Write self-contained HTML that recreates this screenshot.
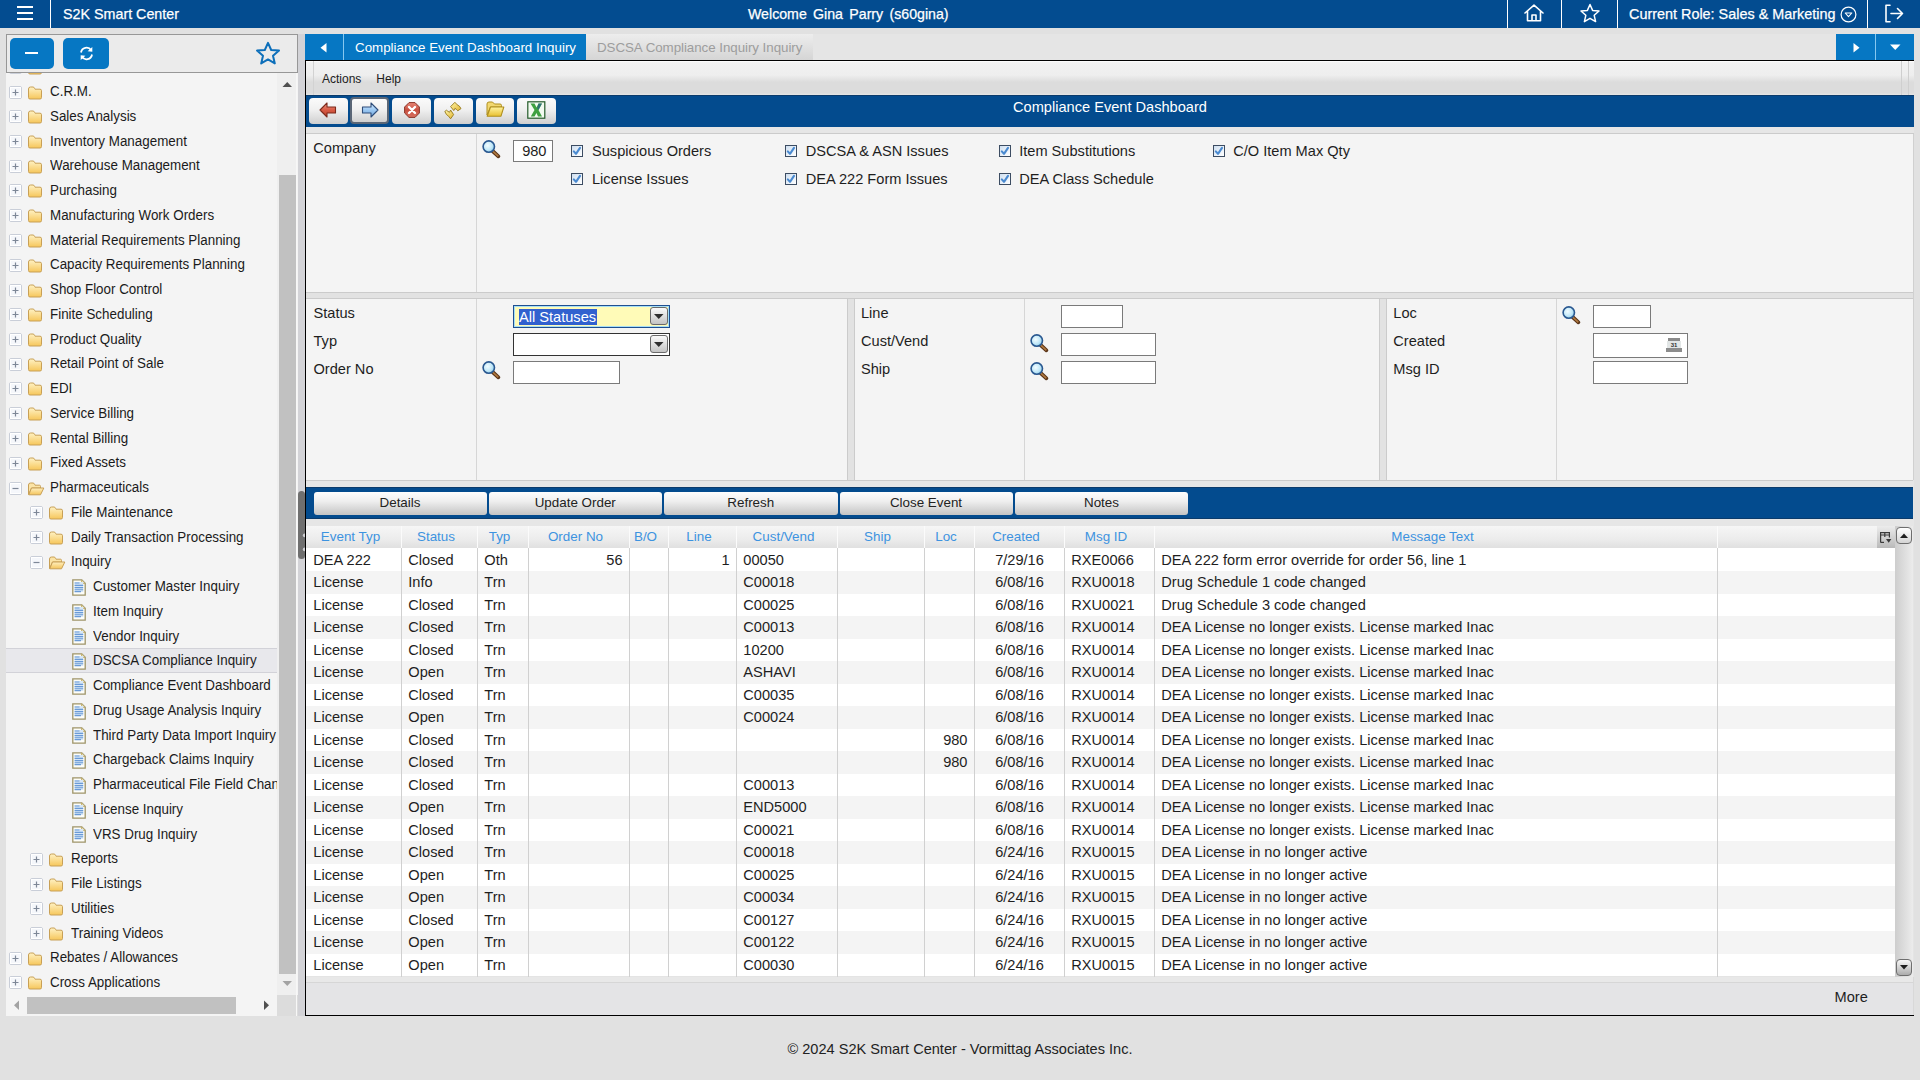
<!DOCTYPE html>
<html><head><meta charset="utf-8"><title>S2K Smart Center</title>
<style>
*{box-sizing:border-box;margin:0;padding:0}
html,body{width:1920px;height:1080px;overflow:hidden}
body{background:#e1e1e1;font-family:"Liberation Sans",sans-serif;position:relative;color:#1e1e1e}
.a{position:absolute}
.t{position:absolute;white-space:nowrap}
svg{position:absolute;overflow:visible}
</style></head><body>
<div class="a" style="left:0px;top:0px;width:1920px;height:28px;background:#034c90"></div>
<div class="a" style="left:17px;top:6px;width:16px;height:2px;background:#fff"></div>
<div class="a" style="left:17px;top:12px;width:16px;height:2px;background:#fff"></div>
<div class="a" style="left:17px;top:18px;width:16px;height:2px;background:#fff"></div>
<div class="a" style="left:50px;top:0px;width:1px;height:28px;background:#fff"></div>
<div class="t" style="left:62.5px;transform:scaleX(0.966);transform-origin:0 50%;top:7.07px;font-size:14.8px;line-height:14.8px;color:#fff;-webkit-text-stroke:0.25px #fff">S2K Smart Center</div>
<div class="t" style="left:747.5px;transform:scaleX(0.957);transform-origin:0 50%;top:6.57px;font-size:14.8px;line-height:14.8px;color:#fff;word-spacing:2.5px;-webkit-text-stroke:0.25px #fff">Welcome Gina Parry (s60gina)</div>
<div class="a" style="left:1507px;top:0px;width:1px;height:28px;background:#fff"></div>
<div class="a" style="left:1561px;top:0px;width:1px;height:28px;background:#fff"></div>
<div class="a" style="left:1617px;top:0px;width:1px;height:28px;background:#fff"></div>
<div class="a" style="left:1867px;top:0px;width:1px;height:28px;background:#fff"></div>
<div class="t" style="left:1629px;transform:scaleX(0.973);transform-origin:0 50%;top:7.07px;font-size:14.8px;line-height:14.8px;color:#fff;-webkit-text-stroke:0.25px #fff">Current Role: Sales &amp; Marketing</div>
<svg style="left:1523px;top:4px" width="22" height="18" viewBox="0 0 22 18"><path d="M2 9 L11 1.2 L20 9 M4.5 7 V16.8 H17.5 V7 M9 16.8 V11 H13 V16.8" fill="none" stroke="#fff" stroke-width="1.6" stroke-linejoin="round" stroke-linecap="round"/></svg><svg style="left:1579px;top:3px" width="22" height="20" viewBox="0 0 22 20"><path d="M11 1.5 L13.6 7.4 L20 8 L15.2 12.3 L16.6 18.6 L11 15.3 L5.4 18.6 L6.8 12.3 L2 8 L8.4 7.4 Z" fill="none" stroke="#fff" stroke-width="1.5" stroke-linejoin="round"/></svg><svg style="left:1840px;top:6px" width="17" height="17" viewBox="0 0 17 17"><circle cx="8.5" cy="8.5" r="7.4" fill="none" stroke="#fff" stroke-width="1.2"/><path d="M5.2 7 L8.5 10.6 L11.8 7 Z" fill="none" stroke="#fff" stroke-width="1.1" stroke-linejoin="round"/></svg><svg style="left:1884px;top:4px" width="20" height="19" viewBox="0 0 20 19"><path d="M6 1.2 H2 V17.8 H6" fill="none" stroke="#fff" stroke-width="1.6" stroke-linecap="round" stroke-linejoin="round"/><path d="M7 9.5 H18.5 M13.5 4.5 L18.5 9.5 L13.5 14.5" fill="none" stroke="#fff" stroke-width="1.6" stroke-linecap="round" stroke-linejoin="round"/></svg><div class="a" style="left:6px;top:34px;width:292px;height:982px;background:#f4f4f4"></div>
<div class="a" style="left:6px;top:34px;width:292px;height:39px;background:#ebebeb;border:1px solid #979797"></div>
<div class="a" style="left:10px;top:38px;width:44px;height:31px;background:#0677c3;border-radius:5px"></div>
<div class="a" style="left:25px;top:52px;width:13px;height:2px;background:#fff"></div>
<div class="a" style="left:63px;top:38px;width:46px;height:31px;background:#0677c3;border-radius:5px"></div>
<svg style="left:78px;top:45px" width="17" height="17" viewBox="0 0 17 17"><path d="M3 7.5 A5.6 5.6 0 0 1 13.2 5.2" fill="none" stroke="#fff" stroke-width="1.8"/><path d="M14.3 2 L14.3 6.8 L9.6 6.3 Z" fill="#fff"/><path d="M14 9.5 A5.6 5.6 0 0 1 3.8 11.8" fill="none" stroke="#fff" stroke-width="1.8"/><path d="M2.7 15 L2.7 10.2 L7.4 10.7 Z" fill="#fff"/></svg>
<svg style="left:255px;top:41px" width="26" height="24" viewBox="0 0 26 24"><path d="M13 1.8 L16.2 9 L24 9.6 L18 14.8 L19.8 22.4 L13 18.4 L6.2 22.4 L8 14.8 L2 9.6 L9.8 9 Z" fill="none" stroke="#0d6fba" stroke-width="2" stroke-linejoin="round"/></svg>
<div class="a" style="left:6px;top:73px;width:271px;height:924px;overflow:hidden">
<svg style="left:3px;top:13px" width="13" height="13" viewBox="0 0 13 13"><rect x="0.5" y="0.5" width="12" height="12" rx="1.5" fill="#f5f7fb" stroke="#c9ced8" stroke-width="1"/><rect x="1.5" y="1.5" width="10" height="10" fill="none" stroke="#ffffff" stroke-width="1"/><path d="M3.5 6.5 H9.5 M6.5 3.5 V9.5" stroke="#7d8797" stroke-width="1.2"/></svg>
<svg style="left:20.5px;top:13px" width="16" height="14" viewBox="0 0 16 14"><defs><linearGradient id="fg" x1="0" y1="0" x2="0" y2="1"><stop offset="0" stop-color="#fff2c4"/><stop offset="1" stop-color="#f6c65a"/></linearGradient></defs><path d="M1.5 3 Q1.5 1 3.5 1 H6 Q7 1 7.5 2.2 L8 3.2 H13 Q14.5 3.2 14.5 4.7 V11.5 Q14.5 13 13 13 H3 Q1.5 13 1.5 11.5 Z" fill="url(#fg)" stroke="#c8a056" stroke-width="1"/></svg>
<div class="t" style="left:44px;transform:scaleX(0.97);transform-origin:0 50%;top:12.02px;font-size:13.8px;line-height:13.8px;color:#1b1b1b;">C.R.M.</div>
<svg style="left:3px;top:37px" width="13" height="13" viewBox="0 0 13 13"><rect x="0.5" y="0.5" width="12" height="12" rx="1.5" fill="#f5f7fb" stroke="#c9ced8" stroke-width="1"/><rect x="1.5" y="1.5" width="10" height="10" fill="none" stroke="#ffffff" stroke-width="1"/><path d="M3.5 6.5 H9.5 M6.5 3.5 V9.5" stroke="#7d8797" stroke-width="1.2"/></svg>
<svg style="left:20.5px;top:37px" width="16" height="14" viewBox="0 0 16 14"><defs><linearGradient id="fg" x1="0" y1="0" x2="0" y2="1"><stop offset="0" stop-color="#fff2c4"/><stop offset="1" stop-color="#f6c65a"/></linearGradient></defs><path d="M1.5 3 Q1.5 1 3.5 1 H6 Q7 1 7.5 2.2 L8 3.2 H13 Q14.5 3.2 14.5 4.7 V11.5 Q14.5 13 13 13 H3 Q1.5 13 1.5 11.5 Z" fill="url(#fg)" stroke="#c8a056" stroke-width="1"/></svg>
<div class="t" style="left:44px;transform:scaleX(0.97);transform-origin:0 50%;top:36.77px;font-size:13.8px;line-height:13.8px;color:#1b1b1b;">Sales Analysis</div>
<svg style="left:3px;top:62px" width="13" height="13" viewBox="0 0 13 13"><rect x="0.5" y="0.5" width="12" height="12" rx="1.5" fill="#f5f7fb" stroke="#c9ced8" stroke-width="1"/><rect x="1.5" y="1.5" width="10" height="10" fill="none" stroke="#ffffff" stroke-width="1"/><path d="M3.5 6.5 H9.5 M6.5 3.5 V9.5" stroke="#7d8797" stroke-width="1.2"/></svg>
<svg style="left:20.5px;top:62px" width="16" height="14" viewBox="0 0 16 14"><defs><linearGradient id="fg" x1="0" y1="0" x2="0" y2="1"><stop offset="0" stop-color="#fff2c4"/><stop offset="1" stop-color="#f6c65a"/></linearGradient></defs><path d="M1.5 3 Q1.5 1 3.5 1 H6 Q7 1 7.5 2.2 L8 3.2 H13 Q14.5 3.2 14.5 4.7 V11.5 Q14.5 13 13 13 H3 Q1.5 13 1.5 11.5 Z" fill="url(#fg)" stroke="#c8a056" stroke-width="1"/></svg>
<div class="t" style="left:44px;transform:scaleX(0.97);transform-origin:0 50%;top:61.52px;font-size:13.8px;line-height:13.8px;color:#1b1b1b;">Inventory Management</div>
<svg style="left:3px;top:87px" width="13" height="13" viewBox="0 0 13 13"><rect x="0.5" y="0.5" width="12" height="12" rx="1.5" fill="#f5f7fb" stroke="#c9ced8" stroke-width="1"/><rect x="1.5" y="1.5" width="10" height="10" fill="none" stroke="#ffffff" stroke-width="1"/><path d="M3.5 6.5 H9.5 M6.5 3.5 V9.5" stroke="#7d8797" stroke-width="1.2"/></svg>
<svg style="left:20.5px;top:87px" width="16" height="14" viewBox="0 0 16 14"><defs><linearGradient id="fg" x1="0" y1="0" x2="0" y2="1"><stop offset="0" stop-color="#fff2c4"/><stop offset="1" stop-color="#f6c65a"/></linearGradient></defs><path d="M1.5 3 Q1.5 1 3.5 1 H6 Q7 1 7.5 2.2 L8 3.2 H13 Q14.5 3.2 14.5 4.7 V11.5 Q14.5 13 13 13 H3 Q1.5 13 1.5 11.5 Z" fill="url(#fg)" stroke="#c8a056" stroke-width="1"/></svg>
<div class="t" style="left:44px;transform:scaleX(0.97);transform-origin:0 50%;top:86.27px;font-size:13.8px;line-height:13.8px;color:#1b1b1b;">Warehouse Management</div>
<svg style="left:3px;top:111px" width="13" height="13" viewBox="0 0 13 13"><rect x="0.5" y="0.5" width="12" height="12" rx="1.5" fill="#f5f7fb" stroke="#c9ced8" stroke-width="1"/><rect x="1.5" y="1.5" width="10" height="10" fill="none" stroke="#ffffff" stroke-width="1"/><path d="M3.5 6.5 H9.5 M6.5 3.5 V9.5" stroke="#7d8797" stroke-width="1.2"/></svg>
<svg style="left:20.5px;top:111px" width="16" height="14" viewBox="0 0 16 14"><defs><linearGradient id="fg" x1="0" y1="0" x2="0" y2="1"><stop offset="0" stop-color="#fff2c4"/><stop offset="1" stop-color="#f6c65a"/></linearGradient></defs><path d="M1.5 3 Q1.5 1 3.5 1 H6 Q7 1 7.5 2.2 L8 3.2 H13 Q14.5 3.2 14.5 4.7 V11.5 Q14.5 13 13 13 H3 Q1.5 13 1.5 11.5 Z" fill="url(#fg)" stroke="#c8a056" stroke-width="1"/></svg>
<div class="t" style="left:44px;transform:scaleX(0.97);transform-origin:0 50%;top:111.02px;font-size:13.8px;line-height:13.8px;color:#1b1b1b;">Purchasing</div>
<svg style="left:3px;top:136px" width="13" height="13" viewBox="0 0 13 13"><rect x="0.5" y="0.5" width="12" height="12" rx="1.5" fill="#f5f7fb" stroke="#c9ced8" stroke-width="1"/><rect x="1.5" y="1.5" width="10" height="10" fill="none" stroke="#ffffff" stroke-width="1"/><path d="M3.5 6.5 H9.5 M6.5 3.5 V9.5" stroke="#7d8797" stroke-width="1.2"/></svg>
<svg style="left:20.5px;top:136px" width="16" height="14" viewBox="0 0 16 14"><defs><linearGradient id="fg" x1="0" y1="0" x2="0" y2="1"><stop offset="0" stop-color="#fff2c4"/><stop offset="1" stop-color="#f6c65a"/></linearGradient></defs><path d="M1.5 3 Q1.5 1 3.5 1 H6 Q7 1 7.5 2.2 L8 3.2 H13 Q14.5 3.2 14.5 4.7 V11.5 Q14.5 13 13 13 H3 Q1.5 13 1.5 11.5 Z" fill="url(#fg)" stroke="#c8a056" stroke-width="1"/></svg>
<div class="t" style="left:44px;transform:scaleX(0.97);transform-origin:0 50%;top:135.77px;font-size:13.8px;line-height:13.8px;color:#1b1b1b;">Manufacturing Work Orders</div>
<svg style="left:3px;top:161px" width="13" height="13" viewBox="0 0 13 13"><rect x="0.5" y="0.5" width="12" height="12" rx="1.5" fill="#f5f7fb" stroke="#c9ced8" stroke-width="1"/><rect x="1.5" y="1.5" width="10" height="10" fill="none" stroke="#ffffff" stroke-width="1"/><path d="M3.5 6.5 H9.5 M6.5 3.5 V9.5" stroke="#7d8797" stroke-width="1.2"/></svg>
<svg style="left:20.5px;top:161px" width="16" height="14" viewBox="0 0 16 14"><defs><linearGradient id="fg" x1="0" y1="0" x2="0" y2="1"><stop offset="0" stop-color="#fff2c4"/><stop offset="1" stop-color="#f6c65a"/></linearGradient></defs><path d="M1.5 3 Q1.5 1 3.5 1 H6 Q7 1 7.5 2.2 L8 3.2 H13 Q14.5 3.2 14.5 4.7 V11.5 Q14.5 13 13 13 H3 Q1.5 13 1.5 11.5 Z" fill="url(#fg)" stroke="#c8a056" stroke-width="1"/></svg>
<div class="t" style="left:44px;transform:scaleX(0.97);transform-origin:0 50%;top:160.52px;font-size:13.8px;line-height:13.8px;color:#1b1b1b;">Material Requirements Planning</div>
<svg style="left:3px;top:186px" width="13" height="13" viewBox="0 0 13 13"><rect x="0.5" y="0.5" width="12" height="12" rx="1.5" fill="#f5f7fb" stroke="#c9ced8" stroke-width="1"/><rect x="1.5" y="1.5" width="10" height="10" fill="none" stroke="#ffffff" stroke-width="1"/><path d="M3.5 6.5 H9.5 M6.5 3.5 V9.5" stroke="#7d8797" stroke-width="1.2"/></svg>
<svg style="left:20.5px;top:186px" width="16" height="14" viewBox="0 0 16 14"><defs><linearGradient id="fg" x1="0" y1="0" x2="0" y2="1"><stop offset="0" stop-color="#fff2c4"/><stop offset="1" stop-color="#f6c65a"/></linearGradient></defs><path d="M1.5 3 Q1.5 1 3.5 1 H6 Q7 1 7.5 2.2 L8 3.2 H13 Q14.5 3.2 14.5 4.7 V11.5 Q14.5 13 13 13 H3 Q1.5 13 1.5 11.5 Z" fill="url(#fg)" stroke="#c8a056" stroke-width="1"/></svg>
<div class="t" style="left:44px;transform:scaleX(0.97);transform-origin:0 50%;top:185.27px;font-size:13.8px;line-height:13.8px;color:#1b1b1b;">Capacity Requirements Planning</div>
<svg style="left:3px;top:211px" width="13" height="13" viewBox="0 0 13 13"><rect x="0.5" y="0.5" width="12" height="12" rx="1.5" fill="#f5f7fb" stroke="#c9ced8" stroke-width="1"/><rect x="1.5" y="1.5" width="10" height="10" fill="none" stroke="#ffffff" stroke-width="1"/><path d="M3.5 6.5 H9.5 M6.5 3.5 V9.5" stroke="#7d8797" stroke-width="1.2"/></svg>
<svg style="left:20.5px;top:211px" width="16" height="14" viewBox="0 0 16 14"><defs><linearGradient id="fg" x1="0" y1="0" x2="0" y2="1"><stop offset="0" stop-color="#fff2c4"/><stop offset="1" stop-color="#f6c65a"/></linearGradient></defs><path d="M1.5 3 Q1.5 1 3.5 1 H6 Q7 1 7.5 2.2 L8 3.2 H13 Q14.5 3.2 14.5 4.7 V11.5 Q14.5 13 13 13 H3 Q1.5 13 1.5 11.5 Z" fill="url(#fg)" stroke="#c8a056" stroke-width="1"/></svg>
<div class="t" style="left:44px;transform:scaleX(0.97);transform-origin:0 50%;top:210.02px;font-size:13.8px;line-height:13.8px;color:#1b1b1b;">Shop Floor Control</div>
<svg style="left:3px;top:235px" width="13" height="13" viewBox="0 0 13 13"><rect x="0.5" y="0.5" width="12" height="12" rx="1.5" fill="#f5f7fb" stroke="#c9ced8" stroke-width="1"/><rect x="1.5" y="1.5" width="10" height="10" fill="none" stroke="#ffffff" stroke-width="1"/><path d="M3.5 6.5 H9.5 M6.5 3.5 V9.5" stroke="#7d8797" stroke-width="1.2"/></svg>
<svg style="left:20.5px;top:235px" width="16" height="14" viewBox="0 0 16 14"><defs><linearGradient id="fg" x1="0" y1="0" x2="0" y2="1"><stop offset="0" stop-color="#fff2c4"/><stop offset="1" stop-color="#f6c65a"/></linearGradient></defs><path d="M1.5 3 Q1.5 1 3.5 1 H6 Q7 1 7.5 2.2 L8 3.2 H13 Q14.5 3.2 14.5 4.7 V11.5 Q14.5 13 13 13 H3 Q1.5 13 1.5 11.5 Z" fill="url(#fg)" stroke="#c8a056" stroke-width="1"/></svg>
<div class="t" style="left:44px;transform:scaleX(0.97);transform-origin:0 50%;top:234.77px;font-size:13.8px;line-height:13.8px;color:#1b1b1b;">Finite Scheduling</div>
<svg style="left:3px;top:260px" width="13" height="13" viewBox="0 0 13 13"><rect x="0.5" y="0.5" width="12" height="12" rx="1.5" fill="#f5f7fb" stroke="#c9ced8" stroke-width="1"/><rect x="1.5" y="1.5" width="10" height="10" fill="none" stroke="#ffffff" stroke-width="1"/><path d="M3.5 6.5 H9.5 M6.5 3.5 V9.5" stroke="#7d8797" stroke-width="1.2"/></svg>
<svg style="left:20.5px;top:260px" width="16" height="14" viewBox="0 0 16 14"><defs><linearGradient id="fg" x1="0" y1="0" x2="0" y2="1"><stop offset="0" stop-color="#fff2c4"/><stop offset="1" stop-color="#f6c65a"/></linearGradient></defs><path d="M1.5 3 Q1.5 1 3.5 1 H6 Q7 1 7.5 2.2 L8 3.2 H13 Q14.5 3.2 14.5 4.7 V11.5 Q14.5 13 13 13 H3 Q1.5 13 1.5 11.5 Z" fill="url(#fg)" stroke="#c8a056" stroke-width="1"/></svg>
<div class="t" style="left:44px;transform:scaleX(0.97);transform-origin:0 50%;top:259.52px;font-size:13.8px;line-height:13.8px;color:#1b1b1b;">Product Quality</div>
<svg style="left:3px;top:285px" width="13" height="13" viewBox="0 0 13 13"><rect x="0.5" y="0.5" width="12" height="12" rx="1.5" fill="#f5f7fb" stroke="#c9ced8" stroke-width="1"/><rect x="1.5" y="1.5" width="10" height="10" fill="none" stroke="#ffffff" stroke-width="1"/><path d="M3.5 6.5 H9.5 M6.5 3.5 V9.5" stroke="#7d8797" stroke-width="1.2"/></svg>
<svg style="left:20.5px;top:285px" width="16" height="14" viewBox="0 0 16 14"><defs><linearGradient id="fg" x1="0" y1="0" x2="0" y2="1"><stop offset="0" stop-color="#fff2c4"/><stop offset="1" stop-color="#f6c65a"/></linearGradient></defs><path d="M1.5 3 Q1.5 1 3.5 1 H6 Q7 1 7.5 2.2 L8 3.2 H13 Q14.5 3.2 14.5 4.7 V11.5 Q14.5 13 13 13 H3 Q1.5 13 1.5 11.5 Z" fill="url(#fg)" stroke="#c8a056" stroke-width="1"/></svg>
<div class="t" style="left:44px;transform:scaleX(0.97);transform-origin:0 50%;top:284.27px;font-size:13.8px;line-height:13.8px;color:#1b1b1b;">Retail Point of Sale</div>
<svg style="left:3px;top:309px" width="13" height="13" viewBox="0 0 13 13"><rect x="0.5" y="0.5" width="12" height="12" rx="1.5" fill="#f5f7fb" stroke="#c9ced8" stroke-width="1"/><rect x="1.5" y="1.5" width="10" height="10" fill="none" stroke="#ffffff" stroke-width="1"/><path d="M3.5 6.5 H9.5 M6.5 3.5 V9.5" stroke="#7d8797" stroke-width="1.2"/></svg>
<svg style="left:20.5px;top:309px" width="16" height="14" viewBox="0 0 16 14"><defs><linearGradient id="fg" x1="0" y1="0" x2="0" y2="1"><stop offset="0" stop-color="#fff2c4"/><stop offset="1" stop-color="#f6c65a"/></linearGradient></defs><path d="M1.5 3 Q1.5 1 3.5 1 H6 Q7 1 7.5 2.2 L8 3.2 H13 Q14.5 3.2 14.5 4.7 V11.5 Q14.5 13 13 13 H3 Q1.5 13 1.5 11.5 Z" fill="url(#fg)" stroke="#c8a056" stroke-width="1"/></svg>
<div class="t" style="left:44px;transform:scaleX(0.97);transform-origin:0 50%;top:309.02px;font-size:13.8px;line-height:13.8px;color:#1b1b1b;">EDI</div>
<svg style="left:3px;top:334px" width="13" height="13" viewBox="0 0 13 13"><rect x="0.5" y="0.5" width="12" height="12" rx="1.5" fill="#f5f7fb" stroke="#c9ced8" stroke-width="1"/><rect x="1.5" y="1.5" width="10" height="10" fill="none" stroke="#ffffff" stroke-width="1"/><path d="M3.5 6.5 H9.5 M6.5 3.5 V9.5" stroke="#7d8797" stroke-width="1.2"/></svg>
<svg style="left:20.5px;top:334px" width="16" height="14" viewBox="0 0 16 14"><defs><linearGradient id="fg" x1="0" y1="0" x2="0" y2="1"><stop offset="0" stop-color="#fff2c4"/><stop offset="1" stop-color="#f6c65a"/></linearGradient></defs><path d="M1.5 3 Q1.5 1 3.5 1 H6 Q7 1 7.5 2.2 L8 3.2 H13 Q14.5 3.2 14.5 4.7 V11.5 Q14.5 13 13 13 H3 Q1.5 13 1.5 11.5 Z" fill="url(#fg)" stroke="#c8a056" stroke-width="1"/></svg>
<div class="t" style="left:44px;transform:scaleX(0.97);transform-origin:0 50%;top:333.77px;font-size:13.8px;line-height:13.8px;color:#1b1b1b;">Service Billing</div>
<svg style="left:3px;top:359px" width="13" height="13" viewBox="0 0 13 13"><rect x="0.5" y="0.5" width="12" height="12" rx="1.5" fill="#f5f7fb" stroke="#c9ced8" stroke-width="1"/><rect x="1.5" y="1.5" width="10" height="10" fill="none" stroke="#ffffff" stroke-width="1"/><path d="M3.5 6.5 H9.5 M6.5 3.5 V9.5" stroke="#7d8797" stroke-width="1.2"/></svg>
<svg style="left:20.5px;top:359px" width="16" height="14" viewBox="0 0 16 14"><defs><linearGradient id="fg" x1="0" y1="0" x2="0" y2="1"><stop offset="0" stop-color="#fff2c4"/><stop offset="1" stop-color="#f6c65a"/></linearGradient></defs><path d="M1.5 3 Q1.5 1 3.5 1 H6 Q7 1 7.5 2.2 L8 3.2 H13 Q14.5 3.2 14.5 4.7 V11.5 Q14.5 13 13 13 H3 Q1.5 13 1.5 11.5 Z" fill="url(#fg)" stroke="#c8a056" stroke-width="1"/></svg>
<div class="t" style="left:44px;transform:scaleX(0.97);transform-origin:0 50%;top:358.52px;font-size:13.8px;line-height:13.8px;color:#1b1b1b;">Rental Billing</div>
<svg style="left:3px;top:384px" width="13" height="13" viewBox="0 0 13 13"><rect x="0.5" y="0.5" width="12" height="12" rx="1.5" fill="#f5f7fb" stroke="#c9ced8" stroke-width="1"/><rect x="1.5" y="1.5" width="10" height="10" fill="none" stroke="#ffffff" stroke-width="1"/><path d="M3.5 6.5 H9.5 M6.5 3.5 V9.5" stroke="#7d8797" stroke-width="1.2"/></svg>
<svg style="left:20.5px;top:384px" width="16" height="14" viewBox="0 0 16 14"><defs><linearGradient id="fg" x1="0" y1="0" x2="0" y2="1"><stop offset="0" stop-color="#fff2c4"/><stop offset="1" stop-color="#f6c65a"/></linearGradient></defs><path d="M1.5 3 Q1.5 1 3.5 1 H6 Q7 1 7.5 2.2 L8 3.2 H13 Q14.5 3.2 14.5 4.7 V11.5 Q14.5 13 13 13 H3 Q1.5 13 1.5 11.5 Z" fill="url(#fg)" stroke="#c8a056" stroke-width="1"/></svg>
<div class="t" style="left:44px;transform:scaleX(0.97);transform-origin:0 50%;top:383.27px;font-size:13.8px;line-height:13.8px;color:#1b1b1b;">Fixed Assets</div>
<svg style="left:3px;top:409px" width="13" height="13" viewBox="0 0 13 13"><rect x="0.5" y="0.5" width="12" height="12" rx="1.5" fill="#f5f7fb" stroke="#c9ced8" stroke-width="1"/><rect x="1.5" y="1.5" width="10" height="10" fill="none" stroke="#ffffff" stroke-width="1"/><path d="M3.5 6.5 H9.5" stroke="#7d8797" stroke-width="1.2"/></svg>
<svg style="left:20.5px;top:409px" width="18" height="14" viewBox="0 0 18 14"><defs><linearGradient id="fgo" x1="0" y1="0" x2="0" y2="1"><stop offset="0" stop-color="#fff0c0"/><stop offset="1" stop-color="#f4c45a"/></linearGradient></defs><path d="M1.5 3 Q1.5 1 3.5 1 H6 Q7 1 7.5 2.2 L8 3.2 H12.5 Q13.5 3.2 13.5 4.5 V6 H4.5 L1.5 12.5 Z" fill="#fbe4a6" stroke="#c8a056" stroke-width="1"/><path d="M4.5 6 H16.8 L13.5 12.8 H1.8 Z" fill="url(#fgo)" stroke="#c8a056" stroke-width="1" stroke-linejoin="round"/></svg>
<div class="t" style="left:44px;transform:scaleX(0.97);transform-origin:0 50%;top:408.02px;font-size:13.8px;line-height:13.8px;color:#1b1b1b;">Pharmaceuticals</div>
<svg style="left:24px;top:433px" width="13" height="13" viewBox="0 0 13 13"><rect x="0.5" y="0.5" width="12" height="12" rx="1.5" fill="#f5f7fb" stroke="#c9ced8" stroke-width="1"/><rect x="1.5" y="1.5" width="10" height="10" fill="none" stroke="#ffffff" stroke-width="1"/><path d="M3.5 6.5 H9.5 M6.5 3.5 V9.5" stroke="#7d8797" stroke-width="1.2"/></svg>
<svg style="left:41.5px;top:433px" width="16" height="14" viewBox="0 0 16 14"><defs><linearGradient id="fg" x1="0" y1="0" x2="0" y2="1"><stop offset="0" stop-color="#fff2c4"/><stop offset="1" stop-color="#f6c65a"/></linearGradient></defs><path d="M1.5 3 Q1.5 1 3.5 1 H6 Q7 1 7.5 2.2 L8 3.2 H13 Q14.5 3.2 14.5 4.7 V11.5 Q14.5 13 13 13 H3 Q1.5 13 1.5 11.5 Z" fill="url(#fg)" stroke="#c8a056" stroke-width="1"/></svg>
<div class="t" style="left:65px;transform:scaleX(0.97);transform-origin:0 50%;top:432.77px;font-size:13.8px;line-height:13.8px;color:#1b1b1b;">File Maintenance</div>
<svg style="left:24px;top:458px" width="13" height="13" viewBox="0 0 13 13"><rect x="0.5" y="0.5" width="12" height="12" rx="1.5" fill="#f5f7fb" stroke="#c9ced8" stroke-width="1"/><rect x="1.5" y="1.5" width="10" height="10" fill="none" stroke="#ffffff" stroke-width="1"/><path d="M3.5 6.5 H9.5 M6.5 3.5 V9.5" stroke="#7d8797" stroke-width="1.2"/></svg>
<svg style="left:41.5px;top:458px" width="16" height="14" viewBox="0 0 16 14"><defs><linearGradient id="fg" x1="0" y1="0" x2="0" y2="1"><stop offset="0" stop-color="#fff2c4"/><stop offset="1" stop-color="#f6c65a"/></linearGradient></defs><path d="M1.5 3 Q1.5 1 3.5 1 H6 Q7 1 7.5 2.2 L8 3.2 H13 Q14.5 3.2 14.5 4.7 V11.5 Q14.5 13 13 13 H3 Q1.5 13 1.5 11.5 Z" fill="url(#fg)" stroke="#c8a056" stroke-width="1"/></svg>
<div class="t" style="left:65px;transform:scaleX(0.97);transform-origin:0 50%;top:457.52px;font-size:13.8px;line-height:13.8px;color:#1b1b1b;">Daily Transaction Processing</div>
<svg style="left:24px;top:483px" width="13" height="13" viewBox="0 0 13 13"><rect x="0.5" y="0.5" width="12" height="12" rx="1.5" fill="#f5f7fb" stroke="#c9ced8" stroke-width="1"/><rect x="1.5" y="1.5" width="10" height="10" fill="none" stroke="#ffffff" stroke-width="1"/><path d="M3.5 6.5 H9.5" stroke="#7d8797" stroke-width="1.2"/></svg>
<svg style="left:41.5px;top:483px" width="18" height="14" viewBox="0 0 18 14"><defs><linearGradient id="fgo" x1="0" y1="0" x2="0" y2="1"><stop offset="0" stop-color="#fff0c0"/><stop offset="1" stop-color="#f4c45a"/></linearGradient></defs><path d="M1.5 3 Q1.5 1 3.5 1 H6 Q7 1 7.5 2.2 L8 3.2 H12.5 Q13.5 3.2 13.5 4.5 V6 H4.5 L1.5 12.5 Z" fill="#fbe4a6" stroke="#c8a056" stroke-width="1"/><path d="M4.5 6 H16.8 L13.5 12.8 H1.8 Z" fill="url(#fgo)" stroke="#c8a056" stroke-width="1" stroke-linejoin="round"/></svg>
<div class="t" style="left:65px;transform:scaleX(0.97);transform-origin:0 50%;top:482.27px;font-size:13.8px;line-height:13.8px;color:#1b1b1b;">Inquiry</div>
<svg style="left:66px;top:506px" width="14" height="17" viewBox="0 0 14 17"><path d="M0.8 0.8 H9.8 L13.2 4.2 V16.2 H0.8 Z" fill="#fdfdf8" stroke="#9e9468" stroke-width="1.3"/><path d="M9.5 0.8 V4.5 H13.2" fill="#e6d8a8" stroke="#c0a860" stroke-width="0.8"/><rect x="2.6" y="3" width="8.6" height="10" fill="#d6e6f6"/><path d="M2.6 4 H7.5 M2.6 6.4 H11.2 M2.6 8.6 H11.2 M2.6 10.8 H11.2 M2.6 12.6 H9" stroke="#6a9ad6" stroke-width="1.1"/></svg>
<div class="t" style="left:86.5px;transform:scaleX(0.97);transform-origin:0 50%;top:507.02px;font-size:13.8px;line-height:13.8px;color:#1b1b1b;">Customer Master Inquiry</div>
<svg style="left:66px;top:531px" width="14" height="17" viewBox="0 0 14 17"><path d="M0.8 0.8 H9.8 L13.2 4.2 V16.2 H0.8 Z" fill="#fdfdf8" stroke="#9e9468" stroke-width="1.3"/><path d="M9.5 0.8 V4.5 H13.2" fill="#e6d8a8" stroke="#c0a860" stroke-width="0.8"/><rect x="2.6" y="3" width="8.6" height="10" fill="#d6e6f6"/><path d="M2.6 4 H7.5 M2.6 6.4 H11.2 M2.6 8.6 H11.2 M2.6 10.8 H11.2 M2.6 12.6 H9" stroke="#6a9ad6" stroke-width="1.1"/></svg>
<div class="t" style="left:86.5px;transform:scaleX(0.97);transform-origin:0 50%;top:531.77px;font-size:13.8px;line-height:13.8px;color:#1b1b1b;">Item Inquiry</div>
<svg style="left:66px;top:555px" width="14" height="17" viewBox="0 0 14 17"><path d="M0.8 0.8 H9.8 L13.2 4.2 V16.2 H0.8 Z" fill="#fdfdf8" stroke="#9e9468" stroke-width="1.3"/><path d="M9.5 0.8 V4.5 H13.2" fill="#e6d8a8" stroke="#c0a860" stroke-width="0.8"/><rect x="2.6" y="3" width="8.6" height="10" fill="#d6e6f6"/><path d="M2.6 4 H7.5 M2.6 6.4 H11.2 M2.6 8.6 H11.2 M2.6 10.8 H11.2 M2.6 12.6 H9" stroke="#6a9ad6" stroke-width="1.1"/></svg>
<div class="t" style="left:86.5px;transform:scaleX(0.97);transform-origin:0 50%;top:556.52px;font-size:13.8px;line-height:13.8px;color:#1b1b1b;">Vendor Inquiry</div>
<div class="a" style="left:0;top:575.17px;width:271px;height:24.75px;background:#e8e8ec;border-top:1px solid #d2d2d8;border-bottom:1px solid #d2d2d8"></div>
<svg style="left:66px;top:580px" width="14" height="17" viewBox="0 0 14 17"><path d="M0.8 0.8 H9.8 L13.2 4.2 V16.2 H0.8 Z" fill="#fdfdf8" stroke="#9e9468" stroke-width="1.3"/><path d="M9.5 0.8 V4.5 H13.2" fill="#e6d8a8" stroke="#c0a860" stroke-width="0.8"/><rect x="2.6" y="3" width="8.6" height="10" fill="#d6e6f6"/><path d="M2.6 4 H7.5 M2.6 6.4 H11.2 M2.6 8.6 H11.2 M2.6 10.8 H11.2 M2.6 12.6 H9" stroke="#6a9ad6" stroke-width="1.1"/></svg>
<div class="t" style="left:86.5px;transform:scaleX(0.97);transform-origin:0 50%;top:581.27px;font-size:13.8px;line-height:13.8px;color:#1b1b1b;">DSCSA Compliance Inquiry</div>
<svg style="left:66px;top:605px" width="14" height="17" viewBox="0 0 14 17"><path d="M0.8 0.8 H9.8 L13.2 4.2 V16.2 H0.8 Z" fill="#fdfdf8" stroke="#9e9468" stroke-width="1.3"/><path d="M9.5 0.8 V4.5 H13.2" fill="#e6d8a8" stroke="#c0a860" stroke-width="0.8"/><rect x="2.6" y="3" width="8.6" height="10" fill="#d6e6f6"/><path d="M2.6 4 H7.5 M2.6 6.4 H11.2 M2.6 8.6 H11.2 M2.6 10.8 H11.2 M2.6 12.6 H9" stroke="#6a9ad6" stroke-width="1.1"/></svg>
<div class="t" style="left:86.5px;transform:scaleX(0.97);transform-origin:0 50%;top:606.02px;font-size:13.8px;line-height:13.8px;color:#1b1b1b;">Compliance Event Dashboard</div>
<svg style="left:66px;top:630px" width="14" height="17" viewBox="0 0 14 17"><path d="M0.8 0.8 H9.8 L13.2 4.2 V16.2 H0.8 Z" fill="#fdfdf8" stroke="#9e9468" stroke-width="1.3"/><path d="M9.5 0.8 V4.5 H13.2" fill="#e6d8a8" stroke="#c0a860" stroke-width="0.8"/><rect x="2.6" y="3" width="8.6" height="10" fill="#d6e6f6"/><path d="M2.6 4 H7.5 M2.6 6.4 H11.2 M2.6 8.6 H11.2 M2.6 10.8 H11.2 M2.6 12.6 H9" stroke="#6a9ad6" stroke-width="1.1"/></svg>
<div class="t" style="left:86.5px;transform:scaleX(0.97);transform-origin:0 50%;top:630.77px;font-size:13.8px;line-height:13.8px;color:#1b1b1b;">Drug Usage Analysis Inquiry</div>
<svg style="left:66px;top:654px" width="14" height="17" viewBox="0 0 14 17"><path d="M0.8 0.8 H9.8 L13.2 4.2 V16.2 H0.8 Z" fill="#fdfdf8" stroke="#9e9468" stroke-width="1.3"/><path d="M9.5 0.8 V4.5 H13.2" fill="#e6d8a8" stroke="#c0a860" stroke-width="0.8"/><rect x="2.6" y="3" width="8.6" height="10" fill="#d6e6f6"/><path d="M2.6 4 H7.5 M2.6 6.4 H11.2 M2.6 8.6 H11.2 M2.6 10.8 H11.2 M2.6 12.6 H9" stroke="#6a9ad6" stroke-width="1.1"/></svg>
<div class="t" style="left:86.5px;transform:scaleX(0.97);transform-origin:0 50%;top:655.52px;font-size:13.8px;line-height:13.8px;color:#1b1b1b;">Third Party Data Import Inquiry</div>
<svg style="left:66px;top:679px" width="14" height="17" viewBox="0 0 14 17"><path d="M0.8 0.8 H9.8 L13.2 4.2 V16.2 H0.8 Z" fill="#fdfdf8" stroke="#9e9468" stroke-width="1.3"/><path d="M9.5 0.8 V4.5 H13.2" fill="#e6d8a8" stroke="#c0a860" stroke-width="0.8"/><rect x="2.6" y="3" width="8.6" height="10" fill="#d6e6f6"/><path d="M2.6 4 H7.5 M2.6 6.4 H11.2 M2.6 8.6 H11.2 M2.6 10.8 H11.2 M2.6 12.6 H9" stroke="#6a9ad6" stroke-width="1.1"/></svg>
<div class="t" style="left:86.5px;transform:scaleX(0.97);transform-origin:0 50%;top:680.27px;font-size:13.8px;line-height:13.8px;color:#1b1b1b;">Chargeback Claims Inquiry</div>
<svg style="left:66px;top:704px" width="14" height="17" viewBox="0 0 14 17"><path d="M0.8 0.8 H9.8 L13.2 4.2 V16.2 H0.8 Z" fill="#fdfdf8" stroke="#9e9468" stroke-width="1.3"/><path d="M9.5 0.8 V4.5 H13.2" fill="#e6d8a8" stroke="#c0a860" stroke-width="0.8"/><rect x="2.6" y="3" width="8.6" height="10" fill="#d6e6f6"/><path d="M2.6 4 H7.5 M2.6 6.4 H11.2 M2.6 8.6 H11.2 M2.6 10.8 H11.2 M2.6 12.6 H9" stroke="#6a9ad6" stroke-width="1.1"/></svg>
<div class="t" style="left:86.5px;transform:scaleX(0.97);transform-origin:0 50%;top:705.02px;font-size:13.8px;line-height:13.8px;color:#1b1b1b;">Pharmaceutical File Field Changes Inquiry</div>
<svg style="left:66px;top:729px" width="14" height="17" viewBox="0 0 14 17"><path d="M0.8 0.8 H9.8 L13.2 4.2 V16.2 H0.8 Z" fill="#fdfdf8" stroke="#9e9468" stroke-width="1.3"/><path d="M9.5 0.8 V4.5 H13.2" fill="#e6d8a8" stroke="#c0a860" stroke-width="0.8"/><rect x="2.6" y="3" width="8.6" height="10" fill="#d6e6f6"/><path d="M2.6 4 H7.5 M2.6 6.4 H11.2 M2.6 8.6 H11.2 M2.6 10.8 H11.2 M2.6 12.6 H9" stroke="#6a9ad6" stroke-width="1.1"/></svg>
<div class="t" style="left:86.5px;transform:scaleX(0.97);transform-origin:0 50%;top:729.77px;font-size:13.8px;line-height:13.8px;color:#1b1b1b;">License Inquiry</div>
<svg style="left:66px;top:753px" width="14" height="17" viewBox="0 0 14 17"><path d="M0.8 0.8 H9.8 L13.2 4.2 V16.2 H0.8 Z" fill="#fdfdf8" stroke="#9e9468" stroke-width="1.3"/><path d="M9.5 0.8 V4.5 H13.2" fill="#e6d8a8" stroke="#c0a860" stroke-width="0.8"/><rect x="2.6" y="3" width="8.6" height="10" fill="#d6e6f6"/><path d="M2.6 4 H7.5 M2.6 6.4 H11.2 M2.6 8.6 H11.2 M2.6 10.8 H11.2 M2.6 12.6 H9" stroke="#6a9ad6" stroke-width="1.1"/></svg>
<div class="t" style="left:86.5px;transform:scaleX(0.97);transform-origin:0 50%;top:754.52px;font-size:13.8px;line-height:13.8px;color:#1b1b1b;">VRS Drug Inquiry</div>
<svg style="left:24px;top:780px" width="13" height="13" viewBox="0 0 13 13"><rect x="0.5" y="0.5" width="12" height="12" rx="1.5" fill="#f5f7fb" stroke="#c9ced8" stroke-width="1"/><rect x="1.5" y="1.5" width="10" height="10" fill="none" stroke="#ffffff" stroke-width="1"/><path d="M3.5 6.5 H9.5 M6.5 3.5 V9.5" stroke="#7d8797" stroke-width="1.2"/></svg>
<svg style="left:41.5px;top:780px" width="16" height="14" viewBox="0 0 16 14"><defs><linearGradient id="fg" x1="0" y1="0" x2="0" y2="1"><stop offset="0" stop-color="#fff2c4"/><stop offset="1" stop-color="#f6c65a"/></linearGradient></defs><path d="M1.5 3 Q1.5 1 3.5 1 H6 Q7 1 7.5 2.2 L8 3.2 H13 Q14.5 3.2 14.5 4.7 V11.5 Q14.5 13 13 13 H3 Q1.5 13 1.5 11.5 Z" fill="url(#fg)" stroke="#c8a056" stroke-width="1"/></svg>
<div class="t" style="left:65px;transform:scaleX(0.97);transform-origin:0 50%;top:779.27px;font-size:13.8px;line-height:13.8px;color:#1b1b1b;">Reports</div>
<svg style="left:24px;top:805px" width="13" height="13" viewBox="0 0 13 13"><rect x="0.5" y="0.5" width="12" height="12" rx="1.5" fill="#f5f7fb" stroke="#c9ced8" stroke-width="1"/><rect x="1.5" y="1.5" width="10" height="10" fill="none" stroke="#ffffff" stroke-width="1"/><path d="M3.5 6.5 H9.5 M6.5 3.5 V9.5" stroke="#7d8797" stroke-width="1.2"/></svg>
<svg style="left:41.5px;top:805px" width="16" height="14" viewBox="0 0 16 14"><defs><linearGradient id="fg" x1="0" y1="0" x2="0" y2="1"><stop offset="0" stop-color="#fff2c4"/><stop offset="1" stop-color="#f6c65a"/></linearGradient></defs><path d="M1.5 3 Q1.5 1 3.5 1 H6 Q7 1 7.5 2.2 L8 3.2 H13 Q14.5 3.2 14.5 4.7 V11.5 Q14.5 13 13 13 H3 Q1.5 13 1.5 11.5 Z" fill="url(#fg)" stroke="#c8a056" stroke-width="1"/></svg>
<div class="t" style="left:65px;transform:scaleX(0.97);transform-origin:0 50%;top:804.02px;font-size:13.8px;line-height:13.8px;color:#1b1b1b;">File Listings</div>
<svg style="left:24px;top:829px" width="13" height="13" viewBox="0 0 13 13"><rect x="0.5" y="0.5" width="12" height="12" rx="1.5" fill="#f5f7fb" stroke="#c9ced8" stroke-width="1"/><rect x="1.5" y="1.5" width="10" height="10" fill="none" stroke="#ffffff" stroke-width="1"/><path d="M3.5 6.5 H9.5 M6.5 3.5 V9.5" stroke="#7d8797" stroke-width="1.2"/></svg>
<svg style="left:41.5px;top:829px" width="16" height="14" viewBox="0 0 16 14"><defs><linearGradient id="fg" x1="0" y1="0" x2="0" y2="1"><stop offset="0" stop-color="#fff2c4"/><stop offset="1" stop-color="#f6c65a"/></linearGradient></defs><path d="M1.5 3 Q1.5 1 3.5 1 H6 Q7 1 7.5 2.2 L8 3.2 H13 Q14.5 3.2 14.5 4.7 V11.5 Q14.5 13 13 13 H3 Q1.5 13 1.5 11.5 Z" fill="url(#fg)" stroke="#c8a056" stroke-width="1"/></svg>
<div class="t" style="left:65px;transform:scaleX(0.97);transform-origin:0 50%;top:828.77px;font-size:13.8px;line-height:13.8px;color:#1b1b1b;">Utilities</div>
<svg style="left:24px;top:854px" width="13" height="13" viewBox="0 0 13 13"><rect x="0.5" y="0.5" width="12" height="12" rx="1.5" fill="#f5f7fb" stroke="#c9ced8" stroke-width="1"/><rect x="1.5" y="1.5" width="10" height="10" fill="none" stroke="#ffffff" stroke-width="1"/><path d="M3.5 6.5 H9.5 M6.5 3.5 V9.5" stroke="#7d8797" stroke-width="1.2"/></svg>
<svg style="left:41.5px;top:854px" width="16" height="14" viewBox="0 0 16 14"><defs><linearGradient id="fg" x1="0" y1="0" x2="0" y2="1"><stop offset="0" stop-color="#fff2c4"/><stop offset="1" stop-color="#f6c65a"/></linearGradient></defs><path d="M1.5 3 Q1.5 1 3.5 1 H6 Q7 1 7.5 2.2 L8 3.2 H13 Q14.5 3.2 14.5 4.7 V11.5 Q14.5 13 13 13 H3 Q1.5 13 1.5 11.5 Z" fill="url(#fg)" stroke="#c8a056" stroke-width="1"/></svg>
<div class="t" style="left:65px;transform:scaleX(0.97);transform-origin:0 50%;top:853.52px;font-size:13.8px;line-height:13.8px;color:#1b1b1b;">Training Videos</div>
<svg style="left:3px;top:879px" width="13" height="13" viewBox="0 0 13 13"><rect x="0.5" y="0.5" width="12" height="12" rx="1.5" fill="#f5f7fb" stroke="#c9ced8" stroke-width="1"/><rect x="1.5" y="1.5" width="10" height="10" fill="none" stroke="#ffffff" stroke-width="1"/><path d="M3.5 6.5 H9.5 M6.5 3.5 V9.5" stroke="#7d8797" stroke-width="1.2"/></svg>
<svg style="left:20.5px;top:879px" width="16" height="14" viewBox="0 0 16 14"><defs><linearGradient id="fg" x1="0" y1="0" x2="0" y2="1"><stop offset="0" stop-color="#fff2c4"/><stop offset="1" stop-color="#f6c65a"/></linearGradient></defs><path d="M1.5 3 Q1.5 1 3.5 1 H6 Q7 1 7.5 2.2 L8 3.2 H13 Q14.5 3.2 14.5 4.7 V11.5 Q14.5 13 13 13 H3 Q1.5 13 1.5 11.5 Z" fill="url(#fg)" stroke="#c8a056" stroke-width="1"/></svg>
<div class="t" style="left:44px;transform:scaleX(0.97);transform-origin:0 50%;top:878.27px;font-size:13.8px;line-height:13.8px;color:#1b1b1b;">Rebates / Allowances</div>
<svg style="left:3px;top:903px" width="13" height="13" viewBox="0 0 13 13"><rect x="0.5" y="0.5" width="12" height="12" rx="1.5" fill="#f5f7fb" stroke="#c9ced8" stroke-width="1"/><rect x="1.5" y="1.5" width="10" height="10" fill="none" stroke="#ffffff" stroke-width="1"/><path d="M3.5 6.5 H9.5 M6.5 3.5 V9.5" stroke="#7d8797" stroke-width="1.2"/></svg>
<svg style="left:20.5px;top:903px" width="16" height="14" viewBox="0 0 16 14"><defs><linearGradient id="fg" x1="0" y1="0" x2="0" y2="1"><stop offset="0" stop-color="#fff2c4"/><stop offset="1" stop-color="#f6c65a"/></linearGradient></defs><path d="M1.5 3 Q1.5 1 3.5 1 H6 Q7 1 7.5 2.2 L8 3.2 H13 Q14.5 3.2 14.5 4.7 V11.5 Q14.5 13 13 13 H3 Q1.5 13 1.5 11.5 Z" fill="url(#fg)" stroke="#c8a056" stroke-width="1"/></svg>
<div class="t" style="left:44px;transform:scaleX(0.97);transform-origin:0 50%;top:903.02px;font-size:13.8px;line-height:13.8px;color:#1b1b1b;">Cross Applications</div>
<svg style="left:3px;top:-12px" width="13" height="13" viewBox="0 0 13 13"><rect x="0.5" y="0.5" width="12" height="12" rx="1.5" fill="#f5f7fb" stroke="#c9ced8" stroke-width="1"/><rect x="1.5" y="1.5" width="10" height="10" fill="none" stroke="#ffffff" stroke-width="1"/><path d="M3.5 6.5 H9.5 M6.5 3.5 V9.5" stroke="#7d8797" stroke-width="1.2"/></svg>
<svg style="left:21px;top:-12px" width="16" height="14" viewBox="0 0 16 14"><defs><linearGradient id="fg" x1="0" y1="0" x2="0" y2="1"><stop offset="0" stop-color="#fff2c4"/><stop offset="1" stop-color="#f6c65a"/></linearGradient></defs><path d="M1.5 3 Q1.5 1 3.5 1 H6 Q7 1 7.5 2.2 L8 3.2 H13 Q14.5 3.2 14.5 4.7 V11.5 Q14.5 13 13 13 H3 Q1.5 13 1.5 11.5 Z" fill="url(#fg)" stroke="#c8a056" stroke-width="1"/></svg>
</div>
<div class="a" style="left:6px;top:34px;width:292px;height:39px;background:#ebebeb;border:1px solid #979797;z-index:2"></div>
<div class="a" style="left:10px;top:38px;width:44px;height:31px;background:#0677c3;border-radius:5px;z-index:3"></div>
<div class="a" style="left:25px;top:52px;width:13px;height:2px;background:#fff;z-index:3"></div>
<div class="a" style="left:63px;top:38px;width:46px;height:31px;background:#0677c3;border-radius:5px;z-index:3"></div>
<svg style="left:78px;top:45px;z-index:3" width="17" height="17" viewBox="0 0 17 17"><path d="M3 7.5 A5.6 5.6 0 0 1 13.2 5.2" fill="none" stroke="#fff" stroke-width="1.8"/><path d="M14.3 2 L14.3 6.8 L9.6 6.3 Z" fill="#fff"/><path d="M14 9.5 A5.6 5.6 0 0 1 3.8 11.8" fill="none" stroke="#fff" stroke-width="1.8"/><path d="M2.7 15 L2.7 10.2 L7.4 10.7 Z" fill="#fff"/></svg>
<svg style="left:255px;top:41px;z-index:3" width="26" height="24" viewBox="0 0 26 24"><path d="M13 1.8 L16.2 9 L24 9.6 L18 14.8 L19.8 22.4 L13 18.4 L6.2 22.4 L8 14.8 L2 9.6 L9.8 9 Z" fill="none" stroke="#0d6fba" stroke-width="2" stroke-linejoin="round"/></svg>
<div class="a" style="left:277px;top:73px;width:19px;height:922px;background:#efefef"></div>
<div class="a" style="left:279px;top:175px;width:17px;height:799px;background:#c1c1c1"></div>
<svg style="left:282px;top:81px" width="11" height="7" viewBox="0 0 11 7"><path d="M0.5 6 H10 L5.25 1 Z" fill="#505050"/></svg>
<svg style="left:282px;top:980px" width="11" height="7" viewBox="0 0 11 7"><path d="M0.5 1 H10 L5.25 6 Z" fill="#a3a3a3"/></svg>
<div class="a" style="left:6px;top:997px;width:271px;height:19px;background:#f4f4f4"></div>
<div class="a" style="left:27px;top:997px;width:209px;height:17px;background:#c1c1c1"></div>
<svg style="left:13px;top:1000px" width="7" height="11" viewBox="0 0 7 11"><path d="M6 0.5 V10 L1 5.25 Z" fill="#a3a3a3"/></svg>
<svg style="left:263px;top:1000px" width="7" height="11" viewBox="0 0 7 11"><path d="M1 0.5 V10 L6 5.25 Z" fill="#505050"/></svg>
<div class="a" style="left:277px;top:995px;width:21px;height:21px;background:#dcdcdc"></div>
<div class="a" style="left:298px;top:34px;width:7px;height:982px;background:#d3d3d7"></div>
<div class="a" style="left:298px;top:491px;width:7px;height:68px;background:#6f6f6f;border-radius:3.5px"></div>
<svg style="left:298px;top:491px" width="7" height="68" viewBox="0 0 7 68"><circle cx="6.6" cy="44.4" r="1.8" fill="#cfcfd3"/><circle cx="6.6" cy="58.4" r="1.8" fill="#cfcfd3"/></svg>
<div class="a" style="left:296px;top:34px;width:1px;height:982px;background:#f7f7f7"></div>
<div class="a" style="left:305px;top:34px;width:1609px;height:26px;background:#e5e5e5"></div>
<div class="a" style="left:305px;top:34px;width:38px;height:26px;background:#0677c3"></div>
<svg style="left:320px;top:43px" width="7" height="10" viewBox="0 0 7 10"><path d="M6.5 0 V9.5 L0.5 4.75 Z" fill="#fff"/></svg>
<div class="a" style="left:343px;top:34px;width:1px;height:26px;background:#86c8f0"></div>
<div class="a" style="left:344px;top:34px;width:242px;height:26px;background:#0677c3"></div>
<div class="t" style="left:355px;top:41.00px;font-size:13.35px;line-height:13.35px;color:#fff;">Compliance Event Dashboard Inquiry</div>
<div class="a" style="left:586px;top:34px;width:227px;height:26px;background:linear-gradient(#ededed,#d5d5d5)"></div>
<div class="t" style="left:597px;top:41.00px;font-size:13.35px;line-height:13.35px;color:#9d9d9d;letter-spacing:-0.05px">DSCSA Compliance Inquiry Inquiry</div>
<div class="a" style="left:1836px;top:34px;width:78px;height:26px;background:#0677c3"></div>
<div class="a" style="left:1875px;top:34px;width:1px;height:26px;background:#86c8f0"></div>
<svg style="left:1853px;top:43px" width="7" height="10" viewBox="0 0 7 10"><path d="M0.5 0 V9.5 L6.5 4.75 Z" fill="#fff"/></svg>
<svg style="left:1890px;top:44px" width="11" height="7" viewBox="0 0 11 7"><path d="M0 0.5 H10.5 L5.25 6 Z" fill="#fff"/></svg>
<div class="a" style="left:305px;top:60px;width:1609px;height:1px;background:#000"></div>
<div class="a" style="left:305px;top:61px;width:1px;height:955px;background:#000"></div>
<div class="a" style="left:305px;top:1015px;width:1609px;height:1px;background:#000"></div>
<div class="a" style="left:306px;top:61px;width:1608px;height:954px;background:#e4e4e4"></div>
<div class="a" style="left:306px;top:61px;width:1608px;height:34px;background:linear-gradient(#ffffff 0%,#f1f1f1 5%,#eeeeee 42%,#dcdcdc 62%,#dcdcdc 94%,#e6e6e6 100%)"></div>
<div class="a" style="left:313px;top:61px;width:1px;height:34px;background:#d2d2d2"></div>
<div class="t" style="left:322px;top:73.34px;font-size:12px;line-height:12px;color:#202020;">Actions</div>
<div class="t" style="left:376.3px;top:73.34px;font-size:12px;line-height:12px;color:#202020;">Help</div>
<div class="a" style="left:1901px;top:61px;width:1px;height:34px;background:#cfcfcf"></div>
<div class="a" style="left:1908px;top:61px;width:1px;height:34px;background:#cfcfcf"></div>
<div class="a" style="left:306px;top:95px;width:1608px;height:32px;background:#034b8e;border-top:1px solid #0b3b6b"></div>
<div class="a" style="left:309px;top:98px;width:39px;height:25.5px;background:linear-gradient(#fbfbfb 0%,#f0f0f0 45%,#cfcfcf 100%);border-radius:4px;"></div>
<div class="a" style="left:350px;top:97px;width:39px;height:26.5px;background:linear-gradient(#fbfbfb 0%,#f0f0f0 45%,#cfcfcf 100%);border-radius:4px;border:2px solid #5a6676;"></div>
<div class="a" style="left:392px;top:98px;width:39px;height:25.5px;background:linear-gradient(#fbfbfb 0%,#f0f0f0 45%,#cfcfcf 100%);border-radius:4px;"></div>
<div class="a" style="left:434px;top:98px;width:39px;height:25.5px;background:linear-gradient(#fbfbfb 0%,#f0f0f0 45%,#cfcfcf 100%);border-radius:4px;"></div>
<div class="a" style="left:476px;top:98px;width:38px;height:25.5px;background:linear-gradient(#fbfbfb 0%,#f0f0f0 45%,#cfcfcf 100%);border-radius:4px;"></div>
<div class="a" style="left:517px;top:98px;width:39px;height:25.5px;background:linear-gradient(#fbfbfb 0%,#f0f0f0 45%,#cfcfcf 100%);border-radius:4px;"></div>
<svg style="left:319px;top:102px" width="18" height="16" viewBox="0 0 18 16"><defs><linearGradient id="ra" x1="0" y1="0" x2="0" y2="1"><stop offset="0" stop-color="#f09888"/><stop offset="0.5" stop-color="#d85a44"/><stop offset="1" stop-color="#b8402c"/></linearGradient></defs><path d="M1 8 L8 1 V5 H16.5 V11 H8 V15 Z" fill="url(#ra)" stroke="#7c2a1c" stroke-width="1.1" stroke-linejoin="round"/></svg>
<svg style="left:361px;top:102px" width="18" height="16" viewBox="0 0 18 16"><defs><linearGradient id="ba" x1="0" y1="0" x2="0" y2="1"><stop offset="0" stop-color="#d4ecff"/><stop offset="0.5" stop-color="#9cc8f2"/><stop offset="1" stop-color="#6ea4dc"/></linearGradient></defs><path d="M17 8 L10 1 V5 H1.5 V11 H10 V15 Z" fill="url(#ba)" stroke="#2e4d7a" stroke-width="1.1" stroke-linejoin="round"/></svg>
<svg style="left:404px;top:102px" width="16" height="16" viewBox="0 0 16 16"><defs><linearGradient id="rx" x1="0" y1="0" x2="0" y2="1"><stop offset="0" stop-color="#e88878"/><stop offset="0.5" stop-color="#c85040"/><stop offset="1" stop-color="#d87060"/></linearGradient></defs><path d="M5 0.6 H11 L15.4 5 V11 L11 15.4 H5 L0.6 11 V5 Z" fill="url(#rx)" stroke="#8a3428" stroke-width="1"/><path d="M5 5 L11 11 M11 5 L5 11" stroke="#fff" stroke-width="2.4" stroke-linecap="round"/></svg>
<svg style="left:444px;top:101px" width="18" height="19" viewBox="0 0 18 19"><defs><linearGradient id="sw" x1="0" y1="0" x2="1" y2="1"><stop offset="0" stop-color="#fff6a8"/><stop offset="1" stop-color="#e2b430"/></linearGradient></defs><path d="M10.9 1.3 L6.6 5.6 L9.8 9.6 L10.9 7.4 Q12.6 8.2 13.8 9.8 L17 7.6 Q15.6 4.6 13.2 3.8 Z" fill="url(#sw)" stroke="#94781c" stroke-width="0.9" stroke-linejoin="round"/><path d="M9.6 13.6 L6.6 9 L5.6 11.2 Q3.8 10.6 2.6 9.2 L0.8 10.4 Q2.2 14.2 4.6 15.2 L6.6 17.8 Z" fill="url(#sw)" stroke="#94781c" stroke-width="0.9" stroke-linejoin="round"/></svg>
<svg style="left:486px;top:101px" width="19" height="17" viewBox="0 0 19 17"><defs><linearGradient id="yf" x1="0" y1="0" x2="0" y2="1"><stop offset="0" stop-color="#fff4a0"/><stop offset="1" stop-color="#e8c030"/></linearGradient></defs><path d="M1 3 Q1 1 3 1 H6.5 L8.5 3 H14 Q15.5 3 15.5 4.5 V6 H4.5 L1 14 Z" fill="#f2d870" stroke="#b09020" stroke-width="1"/><path d="M4.5 6 H17.8 L15 15.2 H1.2 Z" fill="url(#yf)" stroke="#b09020" stroke-width="1.1" stroke-linejoin="round"/></svg>
<svg style="left:527px;top:101px" width="19" height="18" viewBox="0 0 19 18"><rect x="0.8" y="0.8" width="17" height="16.4" fill="#f2faf0" stroke="#245a2a" stroke-width="1.2"/><path d="M3.5 2.5 H7.5 L9.5 6.5 L11.5 2.5 H15 L11.5 9 L15 15.5 H11 L9.5 12 L7.5 15.5 H3.8 L7.5 9 Z" fill="#3ea040"/><path d="M11.5 2.5 H15 L11.5 9 L10.2 7.2 Z" fill="#2a5c8a" opacity="0.7"/></svg>
<div class="t" style="left:910.0px;width:400px;text-align:center;top:100.14px;font-size:14.6px;line-height:14.6px;color:#fff;">Compliance Event Dashboard</div>
<div class="a" style="left:306px;top:127px;width:1608px;height:7px;background:#e6e6e6"></div>
<div class="a" style="left:306px;top:133px;width:1608px;height:1px;background:#cbcbcb"></div>
<div class="a" style="left:306px;top:134px;width:1607px;height:158px;background:#f4f4f4"></div>
<div class="a" style="left:476px;top:134px;width:1px;height:158px;background:#d6d6d6"></div>
<div class="a" style="left:306px;top:292px;width:1607px;height:1px;background:#cbcbcb"></div>
<div class="a" style="left:306px;top:293px;width:1607px;height:5px;background:#e2e2e2"></div>
<div class="a" style="left:306px;top:298px;width:1607px;height:1px;background:#cbcbcb"></div>
<div class="a" style="left:1913px;top:134px;width:1px;height:346px;background:#d0d0d0"></div>
<div class="t" style="left:313.3px;top:140.94px;font-size:14.6px;line-height:14.6px;color:#1e1e1e;">Company</div>
<svg style="left:481px;top:139px" width="20" height="20" viewBox="0 0 20 20"><defs><radialGradient id="mg" cx="0.4" cy="0.4" r="0.65"><stop offset="0" stop-color="#f2fcff"/><stop offset="0.6" stop-color="#c2e8f8"/><stop offset="1" stop-color="#8ccbe8"/></radialGradient></defs><path d="M11.6 12 L17.4 17.3" stroke="#5a3418" stroke-width="3.8" stroke-linecap="round"/><path d="M11.8 12.2 L16.9 16.8" stroke="#b07a40" stroke-width="1.6" stroke-linecap="round"/><circle cx="7.8" cy="7.6" r="5.7" fill="url(#mg)" stroke="#2a5890" stroke-width="1.6"/></svg>
<div class="a" style="left:513px;top:140px;width:40px;height:22px;background:#fff;border:1px solid #7a7a7a"></div>
<div class="t" style="left:486.5px;width:60px;text-align:right;top:143.94px;font-size:14.6px;line-height:14.6px;color:#1e1e1e;">980</div>
<div class="a" style="left:571px;top:145px;width:12px;height:12px;border:1px solid #3c4c62;background:linear-gradient(135deg,#cfdff0,#ffffff)"></div><svg style="left:571px;top:145px" width="12" height="12" viewBox="0 0 12 12"><path d="M2.8 6.4 L5 8.8 L9 2.8" fill="none" stroke="#4a8ad0" stroke-width="2.1" stroke-linejoin="round" stroke-linecap="round"/></svg>
<div class="t" style="left:592px;top:143.94px;font-size:14.6px;line-height:14.6px;color:#1e1e1e;">Suspicious Orders</div>
<div class="a" style="left:571px;top:173px;width:12px;height:12px;border:1px solid #3c4c62;background:linear-gradient(135deg,#cfdff0,#ffffff)"></div><svg style="left:571px;top:173px" width="12" height="12" viewBox="0 0 12 12"><path d="M2.8 6.4 L5 8.8 L9 2.8" fill="none" stroke="#4a8ad0" stroke-width="2.1" stroke-linejoin="round" stroke-linecap="round"/></svg>
<div class="t" style="left:592px;top:172.14px;font-size:14.6px;line-height:14.6px;color:#1e1e1e;">License Issues</div>
<div class="a" style="left:785px;top:145px;width:12px;height:12px;border:1px solid #3c4c62;background:linear-gradient(135deg,#cfdff0,#ffffff)"></div><svg style="left:785px;top:145px" width="12" height="12" viewBox="0 0 12 12"><path d="M2.8 6.4 L5 8.8 L9 2.8" fill="none" stroke="#4a8ad0" stroke-width="2.1" stroke-linejoin="round" stroke-linecap="round"/></svg>
<div class="t" style="left:805.7px;top:143.94px;font-size:14.6px;line-height:14.6px;color:#1e1e1e;">DSCSA &amp; ASN Issues</div>
<div class="a" style="left:785px;top:173px;width:12px;height:12px;border:1px solid #3c4c62;background:linear-gradient(135deg,#cfdff0,#ffffff)"></div><svg style="left:785px;top:173px" width="12" height="12" viewBox="0 0 12 12"><path d="M2.8 6.4 L5 8.8 L9 2.8" fill="none" stroke="#4a8ad0" stroke-width="2.1" stroke-linejoin="round" stroke-linecap="round"/></svg>
<div class="t" style="left:805.7px;top:172.14px;font-size:14.6px;line-height:14.6px;color:#1e1e1e;">DEA 222 Form Issues</div>
<div class="a" style="left:999px;top:145px;width:12px;height:12px;border:1px solid #3c4c62;background:linear-gradient(135deg,#cfdff0,#ffffff)"></div><svg style="left:999px;top:145px" width="12" height="12" viewBox="0 0 12 12"><path d="M2.8 6.4 L5 8.8 L9 2.8" fill="none" stroke="#4a8ad0" stroke-width="2.1" stroke-linejoin="round" stroke-linecap="round"/></svg>
<div class="t" style="left:1019.2px;top:143.94px;font-size:14.6px;line-height:14.6px;color:#1e1e1e;">Item Substitutions</div>
<div class="a" style="left:999px;top:173px;width:12px;height:12px;border:1px solid #3c4c62;background:linear-gradient(135deg,#cfdff0,#ffffff)"></div><svg style="left:999px;top:173px" width="12" height="12" viewBox="0 0 12 12"><path d="M2.8 6.4 L5 8.8 L9 2.8" fill="none" stroke="#4a8ad0" stroke-width="2.1" stroke-linejoin="round" stroke-linecap="round"/></svg>
<div class="t" style="left:1019.2px;top:172.14px;font-size:14.6px;line-height:14.6px;color:#1e1e1e;">DEA Class Schedule</div>
<div class="a" style="left:1213px;top:145px;width:12px;height:12px;border:1px solid #3c4c62;background:linear-gradient(135deg,#cfdff0,#ffffff)"></div><svg style="left:1213px;top:145px" width="12" height="12" viewBox="0 0 12 12"><path d="M2.8 6.4 L5 8.8 L9 2.8" fill="none" stroke="#4a8ad0" stroke-width="2.1" stroke-linejoin="round" stroke-linecap="round"/></svg>
<div class="t" style="left:1233.2px;top:143.94px;font-size:14.6px;line-height:14.6px;color:#1e1e1e;">C/O Item Max Qty</div>
<div class="a" style="left:847px;top:299px;width:1px;height:181px;background:#cbcbcb"></div>
<div class="a" style="left:848px;top:299px;width:6px;height:181px;background:#e2e2e2"></div>
<div class="a" style="left:854px;top:299px;width:1px;height:181px;background:#cbcbcb"></div>
<div class="a" style="left:1379px;top:299px;width:1px;height:181px;background:#cbcbcb"></div>
<div class="a" style="left:1380px;top:299px;width:6px;height:181px;background:#e2e2e2"></div>
<div class="a" style="left:1386px;top:299px;width:1px;height:181px;background:#cbcbcb"></div>
<div class="a" style="left:306px;top:299px;width:541px;height:181px;background:#f4f4f4"></div>
<div class="a" style="left:855px;top:299px;width:524px;height:181px;background:#f4f4f4"></div>
<div class="a" style="left:1387px;top:299px;width:526px;height:181px;background:#f4f4f4"></div>
<div class="a" style="left:476px;top:299px;width:1px;height:181px;background:#d6d6d6"></div>
<div class="a" style="left:1024px;top:299px;width:1px;height:181px;background:#d6d6d6"></div>
<div class="a" style="left:1556px;top:299px;width:1px;height:181px;background:#d6d6d6"></div>
<div class="a" style="left:306px;top:480px;width:1607px;height:1px;background:#cbcbcb"></div>
<div class="a" style="left:306px;top:481px;width:1608px;height:6px;background:#e6e6e6"></div>
<div class="t" style="left:313.5px;top:305.84px;font-size:14.6px;line-height:14.6px;color:#1e1e1e;">Status</div>
<div class="t" style="left:313.5px;top:333.94px;font-size:14.6px;line-height:14.6px;color:#1e1e1e;">Typ</div>
<div class="t" style="left:313.5px;top:362.04px;font-size:14.6px;line-height:14.6px;color:#1e1e1e;">Order No</div>
<div class="a" style="left:513px;top:305px;width:157px;height:23px;background:#fffbb8;border:1px solid #1f4f90;box-shadow:inset 0 0 0 1px #a6def6"></div>
<div class="a" style="left:518.5px;top:309px;width:78.5px;height:16px;background:#3161cf"></div>
<div class="t" style="left:519px;top:309.64px;font-size:14.6px;line-height:14.6px;color:#fff;">All Statuses</div>
<div class="a" style="left:650px;top:307px;width:18px;height:18px;border:1px solid #6a6a6a;border-radius:3px;background:linear-gradient(#fafafa,#c4c4c4)"></div><svg style="left:654px;top:314px" width="10" height="5" viewBox="0 0 10 5"><path d="M0 0 H9.5 L4.75 5 Z" fill="#2e2e2e"/></svg>
<div class="a" style="left:513px;top:333px;width:157px;height:23px;background:#fff;border:1px solid #333"></div>
<div class="a" style="left:650px;top:335px;width:18px;height:18px;border:1px solid #6a6a6a;border-radius:3px;background:linear-gradient(#fafafa,#c4c4c4)"></div><svg style="left:654px;top:342px" width="10" height="5" viewBox="0 0 10 5"><path d="M0 0 H9.5 L4.75 5 Z" fill="#2e2e2e"/></svg>
<svg style="left:481px;top:360px" width="20" height="20" viewBox="0 0 20 20"><defs><radialGradient id="mg" cx="0.4" cy="0.4" r="0.65"><stop offset="0" stop-color="#f2fcff"/><stop offset="0.6" stop-color="#c2e8f8"/><stop offset="1" stop-color="#8ccbe8"/></radialGradient></defs><path d="M11.6 12 L17.4 17.3" stroke="#5a3418" stroke-width="3.8" stroke-linecap="round"/><path d="M11.8 12.2 L16.9 16.8" stroke="#b07a40" stroke-width="1.6" stroke-linecap="round"/><circle cx="7.8" cy="7.6" r="5.7" fill="url(#mg)" stroke="#2a5890" stroke-width="1.6"/></svg>
<div class="a" style="left:513px;top:361px;width:107px;height:23px;background:#fff;border:1px solid #7a7a7a"></div>
<div class="t" style="left:861px;top:305.84px;font-size:14.6px;line-height:14.6px;color:#1e1e1e;">Line</div>
<div class="t" style="left:861px;top:333.94px;font-size:14.6px;line-height:14.6px;color:#1e1e1e;">Cust/Vend</div>
<div class="t" style="left:861px;top:362.04px;font-size:14.6px;line-height:14.6px;color:#1e1e1e;">Ship</div>
<div class="a" style="left:1061px;top:305px;width:62px;height:23px;background:#fff;border:1px solid #7a7a7a"></div>
<svg style="left:1029px;top:333px" width="20" height="20" viewBox="0 0 20 20"><defs><radialGradient id="mg" cx="0.4" cy="0.4" r="0.65"><stop offset="0" stop-color="#f2fcff"/><stop offset="0.6" stop-color="#c2e8f8"/><stop offset="1" stop-color="#8ccbe8"/></radialGradient></defs><path d="M11.6 12 L17.4 17.3" stroke="#5a3418" stroke-width="3.8" stroke-linecap="round"/><path d="M11.8 12.2 L16.9 16.8" stroke="#b07a40" stroke-width="1.6" stroke-linecap="round"/><circle cx="7.8" cy="7.6" r="5.7" fill="url(#mg)" stroke="#2a5890" stroke-width="1.6"/></svg>
<div class="a" style="left:1061px;top:333px;width:95px;height:23px;background:#fff;border:1px solid #7a7a7a"></div>
<svg style="left:1029px;top:361px" width="20" height="20" viewBox="0 0 20 20"><defs><radialGradient id="mg" cx="0.4" cy="0.4" r="0.65"><stop offset="0" stop-color="#f2fcff"/><stop offset="0.6" stop-color="#c2e8f8"/><stop offset="1" stop-color="#8ccbe8"/></radialGradient></defs><path d="M11.6 12 L17.4 17.3" stroke="#5a3418" stroke-width="3.8" stroke-linecap="round"/><path d="M11.8 12.2 L16.9 16.8" stroke="#b07a40" stroke-width="1.6" stroke-linecap="round"/><circle cx="7.8" cy="7.6" r="5.7" fill="url(#mg)" stroke="#2a5890" stroke-width="1.6"/></svg>
<div class="a" style="left:1061px;top:361px;width:95px;height:23px;background:#fff;border:1px solid #7a7a7a"></div>
<div class="t" style="left:1393.3px;top:305.84px;font-size:14.6px;line-height:14.6px;color:#1e1e1e;">Loc</div>
<div class="t" style="left:1393.3px;top:333.94px;font-size:14.6px;line-height:14.6px;color:#1e1e1e;">Created</div>
<div class="t" style="left:1393.3px;top:362.04px;font-size:14.6px;line-height:14.6px;color:#1e1e1e;">Msg ID</div>
<svg style="left:1561px;top:305px" width="20" height="20" viewBox="0 0 20 20"><defs><radialGradient id="mg" cx="0.4" cy="0.4" r="0.65"><stop offset="0" stop-color="#f2fcff"/><stop offset="0.6" stop-color="#c2e8f8"/><stop offset="1" stop-color="#8ccbe8"/></radialGradient></defs><path d="M11.6 12 L17.4 17.3" stroke="#5a3418" stroke-width="3.8" stroke-linecap="round"/><path d="M11.8 12.2 L16.9 16.8" stroke="#b07a40" stroke-width="1.6" stroke-linecap="round"/><circle cx="7.8" cy="7.6" r="5.7" fill="url(#mg)" stroke="#2a5890" stroke-width="1.6"/></svg>
<div class="a" style="left:1593px;top:305px;width:58px;height:23px;background:#fff;border:1px solid #7a7a7a"></div>
<div class="a" style="left:1593px;top:333px;width:95px;height:25px;background:#fff;border:1px solid #7a7a7a"></div>
<svg style="left:1666px;top:338px" width="16" height="14" viewBox="0 0 16 14"><rect x="2" y="0" width="12" height="3" fill="#8a8a8a"/><rect x="1" y="3" width="14" height="7" fill="#e2e6e6"/><rect x="0" y="10" width="16" height="4" fill="#8c8c8c"/><text x="8" y="9" font-size="6" font-family="Liberation Sans" font-weight="bold" text-anchor="middle" fill="#333">31</text></svg>
<div class="a" style="left:1593px;top:361px;width:95px;height:23px;background:#fff;border:1px solid #7a7a7a"></div>
<div class="a" style="left:306px;top:487px;width:1607px;height:32px;background:#034b8e;border-top:1px solid #0b3b6b;border-bottom:1px solid #0b3b6b"></div>
<div class="a" style="left:313.5px;top:492px;width:173.0px;height:22.5px;background:linear-gradient(#fdfdfd 0%,#efefef 40%,#c4c4c4 100%);border-radius:3px"></div>
<div class="t" style="left:313.5px;width:173.0px;text-align:center;top:496.46px;font-size:13.4px;line-height:13.4px;color:#222;">Details</div>
<div class="a" style="left:488.5px;top:492px;width:173.5px;height:22.5px;background:linear-gradient(#fdfdfd 0%,#efefef 40%,#c4c4c4 100%);border-radius:3px"></div>
<div class="t" style="left:488.5px;width:173.5px;text-align:center;top:496.46px;font-size:13.4px;line-height:13.4px;color:#222;">Update Order</div>
<div class="a" style="left:664px;top:492px;width:173.5px;height:22.5px;background:linear-gradient(#fdfdfd 0%,#efefef 40%,#c4c4c4 100%);border-radius:3px"></div>
<div class="t" style="left:664.0px;width:173.5px;text-align:center;top:496.46px;font-size:13.4px;line-height:13.4px;color:#222;">Refresh</div>
<div class="a" style="left:839.5px;top:492px;width:173.0px;height:22.5px;background:linear-gradient(#fdfdfd 0%,#efefef 40%,#c4c4c4 100%);border-radius:3px"></div>
<div class="t" style="left:839.5px;width:173.0px;text-align:center;top:496.46px;font-size:13.4px;line-height:13.4px;color:#222;">Close Event</div>
<div class="a" style="left:1015px;top:492px;width:173px;height:22.5px;background:linear-gradient(#fdfdfd 0%,#efefef 40%,#c4c4c4 100%);border-radius:3px"></div>
<div class="t" style="left:1015.0px;width:173px;text-align:center;top:496.46px;font-size:13.4px;line-height:13.4px;color:#222;">Notes</div>
<div class="a" style="left:306px;top:519px;width:1608px;height:7px;background:#e6e6e6"></div>
<div class="a" style="left:306px;top:526px;width:1589px;height:22px;background:linear-gradient(#f6f6f6 0%,#ececec 60%,#e0e0e0 100%)"></div>
<div class="t" style="left:303.0px;width:95px;text-align:center;top:530.16px;font-size:13.4px;line-height:13.4px;color:#3d93e0;">Event Typ</div>
<div class="a" style="left:401px;top:526px;width:1px;height:22px;background:#fbfbfb"></div>
<div class="t" style="left:398.0px;width:76px;text-align:center;top:530.16px;font-size:13.4px;line-height:13.4px;color:#3d93e0;">Status</div>
<div class="a" style="left:477px;top:526px;width:1px;height:22px;background:#fbfbfb"></div>
<div class="t" style="left:474.0px;width:51px;text-align:center;top:530.16px;font-size:13.4px;line-height:13.4px;color:#3d93e0;">Typ</div>
<div class="a" style="left:528px;top:526px;width:1px;height:22px;background:#fbfbfb"></div>
<div class="t" style="left:525.0px;width:101px;text-align:center;top:530.16px;font-size:13.4px;line-height:13.4px;color:#3d93e0;">Order No</div>
<div class="a" style="left:629px;top:526px;width:1px;height:22px;background:#fbfbfb"></div>
<div class="t" style="left:626.0px;width:39px;text-align:center;top:530.16px;font-size:13.4px;line-height:13.4px;color:#3d93e0;">B/O</div>
<div class="a" style="left:668px;top:526px;width:1px;height:22px;background:#fbfbfb"></div>
<div class="t" style="left:665.0px;width:68px;text-align:center;top:530.16px;font-size:13.4px;line-height:13.4px;color:#3d93e0;">Line</div>
<div class="a" style="left:736px;top:526px;width:1px;height:22px;background:#fbfbfb"></div>
<div class="t" style="left:733.0px;width:101px;text-align:center;top:530.16px;font-size:13.4px;line-height:13.4px;color:#3d93e0;">Cust/Vend</div>
<div class="a" style="left:837px;top:526px;width:1px;height:22px;background:#fbfbfb"></div>
<div class="t" style="left:834.0px;width:87px;text-align:center;top:530.16px;font-size:13.4px;line-height:13.4px;color:#3d93e0;">Ship</div>
<div class="a" style="left:924px;top:526px;width:1px;height:22px;background:#fbfbfb"></div>
<div class="t" style="left:921.0px;width:50px;text-align:center;top:530.16px;font-size:13.4px;line-height:13.4px;color:#3d93e0;">Loc</div>
<div class="a" style="left:974px;top:526px;width:1px;height:22px;background:#fbfbfb"></div>
<div class="t" style="left:971.0px;width:90px;text-align:center;top:530.16px;font-size:13.4px;line-height:13.4px;color:#3d93e0;">Created</div>
<div class="a" style="left:1064px;top:526px;width:1px;height:22px;background:#fbfbfb"></div>
<div class="t" style="left:1061.0px;width:90px;text-align:center;top:530.16px;font-size:13.4px;line-height:13.4px;color:#3d93e0;">Msg ID</div>
<div class="a" style="left:1154px;top:526px;width:1px;height:22px;background:#fbfbfb"></div>
<div class="t" style="left:1151.0px;width:563px;text-align:center;top:530.16px;font-size:13.4px;line-height:13.4px;color:#3d93e0;">Message Text</div>
<div class="a" style="left:1717px;top:526px;width:1px;height:22px;background:#fbfbfb"></div>
<div class="a" style="left:1877px;top:526px;width:18px;height:22px;background:linear-gradient(#ececec,#b9b9b9)"></div>
<svg style="left:1880px;top:532px" width="12" height="12" viewBox="0 0 12 12"><path d="M0.6 10.4 V0.6 H9.4 V5.5 M0.6 3 H9.4 M4.8 0.6 V5" fill="none" stroke="#3a3a3a" stroke-width="1.2"/><path d="M0.6 10.4 H4" stroke="#3a3a3a" stroke-width="1.2"/><path d="M6 7 H11.4 L8.7 10.8 Z" fill="#3a3a3a"/></svg>
<div class="a" style="left:306px;top:548px;width:1589px;height:0.75px;background:#fff"></div>
<div class="a" style="left:306px;top:548.75px;width:1589px;height:22.5px;background:#ffffff"></div>
<div class="t" style="left:313.3px;top:552.64px;font-size:14.6px;line-height:14.6px;color:#1e1e1e;">DEA 222</div>
<div class="t" style="left:408.3px;top:552.64px;font-size:14.6px;line-height:14.6px;color:#1e1e1e;">Closed</div>
<div class="t" style="left:484.3px;top:552.64px;font-size:14.6px;line-height:14.6px;color:#1e1e1e;">Oth</div>
<div class="t" style="left:422.5px;width:200px;text-align:right;top:552.64px;font-size:14.6px;line-height:14.6px;color:#1e1e1e;">56</div>
<div class="t" style="left:529.5px;width:200px;text-align:right;top:552.64px;font-size:14.6px;line-height:14.6px;color:#1e1e1e;">1</div>
<div class="t" style="left:743.3px;top:552.64px;font-size:14.6px;line-height:14.6px;color:#1e1e1e;">00050</div>
<div class="t" style="left:975.0px;width:89px;text-align:center;top:552.64px;font-size:14.6px;line-height:14.6px;color:#1e1e1e;">7/29/16</div>
<div class="t" style="left:1071.3px;top:552.64px;font-size:14.6px;line-height:14.6px;color:#1e1e1e;">RXE0066</div>
<div class="t" style="left:1161.3px;top:552.64px;font-size:14.6px;line-height:14.6px;color:#1e1e1e;">DEA 222 form error override for order 56, line 1</div>
<div class="a" style="left:306px;top:571.25px;width:1589px;height:22.5px;background:#f4f4f4"></div>
<div class="t" style="left:313.3px;top:575.14px;font-size:14.6px;line-height:14.6px;color:#1e1e1e;">License</div>
<div class="t" style="left:408.3px;top:575.14px;font-size:14.6px;line-height:14.6px;color:#1e1e1e;">Info</div>
<div class="t" style="left:484.3px;top:575.14px;font-size:14.6px;line-height:14.6px;color:#1e1e1e;">Trn</div>
<div class="t" style="left:743.3px;top:575.14px;font-size:14.6px;line-height:14.6px;color:#1e1e1e;">C00018</div>
<div class="t" style="left:975.0px;width:89px;text-align:center;top:575.14px;font-size:14.6px;line-height:14.6px;color:#1e1e1e;">6/08/16</div>
<div class="t" style="left:1071.3px;top:575.14px;font-size:14.6px;line-height:14.6px;color:#1e1e1e;">RXU0018</div>
<div class="t" style="left:1161.3px;top:575.14px;font-size:14.6px;line-height:14.6px;color:#1e1e1e;">Drug Schedule 1 code changed</div>
<div class="a" style="left:306px;top:593.75px;width:1589px;height:22.5px;background:#ffffff"></div>
<div class="t" style="left:313.3px;top:597.64px;font-size:14.6px;line-height:14.6px;color:#1e1e1e;">License</div>
<div class="t" style="left:408.3px;top:597.64px;font-size:14.6px;line-height:14.6px;color:#1e1e1e;">Closed</div>
<div class="t" style="left:484.3px;top:597.64px;font-size:14.6px;line-height:14.6px;color:#1e1e1e;">Trn</div>
<div class="t" style="left:743.3px;top:597.64px;font-size:14.6px;line-height:14.6px;color:#1e1e1e;">C00025</div>
<div class="t" style="left:975.0px;width:89px;text-align:center;top:597.64px;font-size:14.6px;line-height:14.6px;color:#1e1e1e;">6/08/16</div>
<div class="t" style="left:1071.3px;top:597.64px;font-size:14.6px;line-height:14.6px;color:#1e1e1e;">RXU0021</div>
<div class="t" style="left:1161.3px;top:597.64px;font-size:14.6px;line-height:14.6px;color:#1e1e1e;">Drug Schedule 3 code changed</div>
<div class="a" style="left:306px;top:616.25px;width:1589px;height:22.5px;background:#f4f4f4"></div>
<div class="t" style="left:313.3px;top:620.14px;font-size:14.6px;line-height:14.6px;color:#1e1e1e;">License</div>
<div class="t" style="left:408.3px;top:620.14px;font-size:14.6px;line-height:14.6px;color:#1e1e1e;">Closed</div>
<div class="t" style="left:484.3px;top:620.14px;font-size:14.6px;line-height:14.6px;color:#1e1e1e;">Trn</div>
<div class="t" style="left:743.3px;top:620.14px;font-size:14.6px;line-height:14.6px;color:#1e1e1e;">C00013</div>
<div class="t" style="left:975.0px;width:89px;text-align:center;top:620.14px;font-size:14.6px;line-height:14.6px;color:#1e1e1e;">6/08/16</div>
<div class="t" style="left:1071.3px;top:620.14px;font-size:14.6px;line-height:14.6px;color:#1e1e1e;">RXU0014</div>
<div class="t" style="left:1161.3px;top:620.14px;font-size:14.6px;line-height:14.6px;color:#1e1e1e;">DEA License no longer exists. License marked Inac</div>
<div class="a" style="left:306px;top:638.75px;width:1589px;height:22.5px;background:#ffffff"></div>
<div class="t" style="left:313.3px;top:642.64px;font-size:14.6px;line-height:14.6px;color:#1e1e1e;">License</div>
<div class="t" style="left:408.3px;top:642.64px;font-size:14.6px;line-height:14.6px;color:#1e1e1e;">Closed</div>
<div class="t" style="left:484.3px;top:642.64px;font-size:14.6px;line-height:14.6px;color:#1e1e1e;">Trn</div>
<div class="t" style="left:743.3px;top:642.64px;font-size:14.6px;line-height:14.6px;color:#1e1e1e;">10200</div>
<div class="t" style="left:975.0px;width:89px;text-align:center;top:642.64px;font-size:14.6px;line-height:14.6px;color:#1e1e1e;">6/08/16</div>
<div class="t" style="left:1071.3px;top:642.64px;font-size:14.6px;line-height:14.6px;color:#1e1e1e;">RXU0014</div>
<div class="t" style="left:1161.3px;top:642.64px;font-size:14.6px;line-height:14.6px;color:#1e1e1e;">DEA License no longer exists. License marked Inac</div>
<div class="a" style="left:306px;top:661.25px;width:1589px;height:22.5px;background:#f4f4f4"></div>
<div class="t" style="left:313.3px;top:665.14px;font-size:14.6px;line-height:14.6px;color:#1e1e1e;">License</div>
<div class="t" style="left:408.3px;top:665.14px;font-size:14.6px;line-height:14.6px;color:#1e1e1e;">Open</div>
<div class="t" style="left:484.3px;top:665.14px;font-size:14.6px;line-height:14.6px;color:#1e1e1e;">Trn</div>
<div class="t" style="left:743.3px;top:665.14px;font-size:14.6px;line-height:14.6px;color:#1e1e1e;">ASHAVI</div>
<div class="t" style="left:975.0px;width:89px;text-align:center;top:665.14px;font-size:14.6px;line-height:14.6px;color:#1e1e1e;">6/08/16</div>
<div class="t" style="left:1071.3px;top:665.14px;font-size:14.6px;line-height:14.6px;color:#1e1e1e;">RXU0014</div>
<div class="t" style="left:1161.3px;top:665.14px;font-size:14.6px;line-height:14.6px;color:#1e1e1e;">DEA License no longer exists. License marked Inac</div>
<div class="a" style="left:306px;top:683.75px;width:1589px;height:22.5px;background:#ffffff"></div>
<div class="t" style="left:313.3px;top:687.64px;font-size:14.6px;line-height:14.6px;color:#1e1e1e;">License</div>
<div class="t" style="left:408.3px;top:687.64px;font-size:14.6px;line-height:14.6px;color:#1e1e1e;">Closed</div>
<div class="t" style="left:484.3px;top:687.64px;font-size:14.6px;line-height:14.6px;color:#1e1e1e;">Trn</div>
<div class="t" style="left:743.3px;top:687.64px;font-size:14.6px;line-height:14.6px;color:#1e1e1e;">C00035</div>
<div class="t" style="left:975.0px;width:89px;text-align:center;top:687.64px;font-size:14.6px;line-height:14.6px;color:#1e1e1e;">6/08/16</div>
<div class="t" style="left:1071.3px;top:687.64px;font-size:14.6px;line-height:14.6px;color:#1e1e1e;">RXU0014</div>
<div class="t" style="left:1161.3px;top:687.64px;font-size:14.6px;line-height:14.6px;color:#1e1e1e;">DEA License no longer exists. License marked Inac</div>
<div class="a" style="left:306px;top:706.25px;width:1589px;height:22.5px;background:#f4f4f4"></div>
<div class="t" style="left:313.3px;top:710.14px;font-size:14.6px;line-height:14.6px;color:#1e1e1e;">License</div>
<div class="t" style="left:408.3px;top:710.14px;font-size:14.6px;line-height:14.6px;color:#1e1e1e;">Open</div>
<div class="t" style="left:484.3px;top:710.14px;font-size:14.6px;line-height:14.6px;color:#1e1e1e;">Trn</div>
<div class="t" style="left:743.3px;top:710.14px;font-size:14.6px;line-height:14.6px;color:#1e1e1e;">C00024</div>
<div class="t" style="left:975.0px;width:89px;text-align:center;top:710.14px;font-size:14.6px;line-height:14.6px;color:#1e1e1e;">6/08/16</div>
<div class="t" style="left:1071.3px;top:710.14px;font-size:14.6px;line-height:14.6px;color:#1e1e1e;">RXU0014</div>
<div class="t" style="left:1161.3px;top:710.14px;font-size:14.6px;line-height:14.6px;color:#1e1e1e;">DEA License no longer exists. License marked Inac</div>
<div class="a" style="left:306px;top:728.75px;width:1589px;height:22.5px;background:#ffffff"></div>
<div class="t" style="left:313.3px;top:732.64px;font-size:14.6px;line-height:14.6px;color:#1e1e1e;">License</div>
<div class="t" style="left:408.3px;top:732.64px;font-size:14.6px;line-height:14.6px;color:#1e1e1e;">Closed</div>
<div class="t" style="left:484.3px;top:732.64px;font-size:14.6px;line-height:14.6px;color:#1e1e1e;">Trn</div>
<div class="t" style="left:767.5px;width:200px;text-align:right;top:732.64px;font-size:14.6px;line-height:14.6px;color:#1e1e1e;">980</div>
<div class="t" style="left:975.0px;width:89px;text-align:center;top:732.64px;font-size:14.6px;line-height:14.6px;color:#1e1e1e;">6/08/16</div>
<div class="t" style="left:1071.3px;top:732.64px;font-size:14.6px;line-height:14.6px;color:#1e1e1e;">RXU0014</div>
<div class="t" style="left:1161.3px;top:732.64px;font-size:14.6px;line-height:14.6px;color:#1e1e1e;">DEA License no longer exists. License marked Inac</div>
<div class="a" style="left:306px;top:751.25px;width:1589px;height:22.5px;background:#f4f4f4"></div>
<div class="t" style="left:313.3px;top:755.14px;font-size:14.6px;line-height:14.6px;color:#1e1e1e;">License</div>
<div class="t" style="left:408.3px;top:755.14px;font-size:14.6px;line-height:14.6px;color:#1e1e1e;">Closed</div>
<div class="t" style="left:484.3px;top:755.14px;font-size:14.6px;line-height:14.6px;color:#1e1e1e;">Trn</div>
<div class="t" style="left:767.5px;width:200px;text-align:right;top:755.14px;font-size:14.6px;line-height:14.6px;color:#1e1e1e;">980</div>
<div class="t" style="left:975.0px;width:89px;text-align:center;top:755.14px;font-size:14.6px;line-height:14.6px;color:#1e1e1e;">6/08/16</div>
<div class="t" style="left:1071.3px;top:755.14px;font-size:14.6px;line-height:14.6px;color:#1e1e1e;">RXU0014</div>
<div class="t" style="left:1161.3px;top:755.14px;font-size:14.6px;line-height:14.6px;color:#1e1e1e;">DEA License no longer exists. License marked Inac</div>
<div class="a" style="left:306px;top:773.75px;width:1589px;height:22.5px;background:#ffffff"></div>
<div class="t" style="left:313.3px;top:777.64px;font-size:14.6px;line-height:14.6px;color:#1e1e1e;">License</div>
<div class="t" style="left:408.3px;top:777.64px;font-size:14.6px;line-height:14.6px;color:#1e1e1e;">Closed</div>
<div class="t" style="left:484.3px;top:777.64px;font-size:14.6px;line-height:14.6px;color:#1e1e1e;">Trn</div>
<div class="t" style="left:743.3px;top:777.64px;font-size:14.6px;line-height:14.6px;color:#1e1e1e;">C00013</div>
<div class="t" style="left:975.0px;width:89px;text-align:center;top:777.64px;font-size:14.6px;line-height:14.6px;color:#1e1e1e;">6/08/16</div>
<div class="t" style="left:1071.3px;top:777.64px;font-size:14.6px;line-height:14.6px;color:#1e1e1e;">RXU0014</div>
<div class="t" style="left:1161.3px;top:777.64px;font-size:14.6px;line-height:14.6px;color:#1e1e1e;">DEA License no longer exists. License marked Inac</div>
<div class="a" style="left:306px;top:796.25px;width:1589px;height:22.5px;background:#f4f4f4"></div>
<div class="t" style="left:313.3px;top:800.14px;font-size:14.6px;line-height:14.6px;color:#1e1e1e;">License</div>
<div class="t" style="left:408.3px;top:800.14px;font-size:14.6px;line-height:14.6px;color:#1e1e1e;">Open</div>
<div class="t" style="left:484.3px;top:800.14px;font-size:14.6px;line-height:14.6px;color:#1e1e1e;">Trn</div>
<div class="t" style="left:743.3px;top:800.14px;font-size:14.6px;line-height:14.6px;color:#1e1e1e;">END5000</div>
<div class="t" style="left:975.0px;width:89px;text-align:center;top:800.14px;font-size:14.6px;line-height:14.6px;color:#1e1e1e;">6/08/16</div>
<div class="t" style="left:1071.3px;top:800.14px;font-size:14.6px;line-height:14.6px;color:#1e1e1e;">RXU0014</div>
<div class="t" style="left:1161.3px;top:800.14px;font-size:14.6px;line-height:14.6px;color:#1e1e1e;">DEA License no longer exists. License marked Inac</div>
<div class="a" style="left:306px;top:818.75px;width:1589px;height:22.5px;background:#ffffff"></div>
<div class="t" style="left:313.3px;top:822.64px;font-size:14.6px;line-height:14.6px;color:#1e1e1e;">License</div>
<div class="t" style="left:408.3px;top:822.64px;font-size:14.6px;line-height:14.6px;color:#1e1e1e;">Closed</div>
<div class="t" style="left:484.3px;top:822.64px;font-size:14.6px;line-height:14.6px;color:#1e1e1e;">Trn</div>
<div class="t" style="left:743.3px;top:822.64px;font-size:14.6px;line-height:14.6px;color:#1e1e1e;">C00021</div>
<div class="t" style="left:975.0px;width:89px;text-align:center;top:822.64px;font-size:14.6px;line-height:14.6px;color:#1e1e1e;">6/08/16</div>
<div class="t" style="left:1071.3px;top:822.64px;font-size:14.6px;line-height:14.6px;color:#1e1e1e;">RXU0014</div>
<div class="t" style="left:1161.3px;top:822.64px;font-size:14.6px;line-height:14.6px;color:#1e1e1e;">DEA License no longer exists. License marked Inac</div>
<div class="a" style="left:306px;top:841.25px;width:1589px;height:22.5px;background:#f4f4f4"></div>
<div class="t" style="left:313.3px;top:845.14px;font-size:14.6px;line-height:14.6px;color:#1e1e1e;">License</div>
<div class="t" style="left:408.3px;top:845.14px;font-size:14.6px;line-height:14.6px;color:#1e1e1e;">Closed</div>
<div class="t" style="left:484.3px;top:845.14px;font-size:14.6px;line-height:14.6px;color:#1e1e1e;">Trn</div>
<div class="t" style="left:743.3px;top:845.14px;font-size:14.6px;line-height:14.6px;color:#1e1e1e;">C00018</div>
<div class="t" style="left:975.0px;width:89px;text-align:center;top:845.14px;font-size:14.6px;line-height:14.6px;color:#1e1e1e;">6/24/16</div>
<div class="t" style="left:1071.3px;top:845.14px;font-size:14.6px;line-height:14.6px;color:#1e1e1e;">RXU0015</div>
<div class="t" style="left:1161.3px;top:845.14px;font-size:14.6px;line-height:14.6px;color:#1e1e1e;">DEA License in no longer active</div>
<div class="a" style="left:306px;top:863.75px;width:1589px;height:22.5px;background:#ffffff"></div>
<div class="t" style="left:313.3px;top:867.64px;font-size:14.6px;line-height:14.6px;color:#1e1e1e;">License</div>
<div class="t" style="left:408.3px;top:867.64px;font-size:14.6px;line-height:14.6px;color:#1e1e1e;">Open</div>
<div class="t" style="left:484.3px;top:867.64px;font-size:14.6px;line-height:14.6px;color:#1e1e1e;">Trn</div>
<div class="t" style="left:743.3px;top:867.64px;font-size:14.6px;line-height:14.6px;color:#1e1e1e;">C00025</div>
<div class="t" style="left:975.0px;width:89px;text-align:center;top:867.64px;font-size:14.6px;line-height:14.6px;color:#1e1e1e;">6/24/16</div>
<div class="t" style="left:1071.3px;top:867.64px;font-size:14.6px;line-height:14.6px;color:#1e1e1e;">RXU0015</div>
<div class="t" style="left:1161.3px;top:867.64px;font-size:14.6px;line-height:14.6px;color:#1e1e1e;">DEA License in no longer active</div>
<div class="a" style="left:306px;top:886.25px;width:1589px;height:22.5px;background:#f4f4f4"></div>
<div class="t" style="left:313.3px;top:890.14px;font-size:14.6px;line-height:14.6px;color:#1e1e1e;">License</div>
<div class="t" style="left:408.3px;top:890.14px;font-size:14.6px;line-height:14.6px;color:#1e1e1e;">Open</div>
<div class="t" style="left:484.3px;top:890.14px;font-size:14.6px;line-height:14.6px;color:#1e1e1e;">Trn</div>
<div class="t" style="left:743.3px;top:890.14px;font-size:14.6px;line-height:14.6px;color:#1e1e1e;">C00034</div>
<div class="t" style="left:975.0px;width:89px;text-align:center;top:890.14px;font-size:14.6px;line-height:14.6px;color:#1e1e1e;">6/24/16</div>
<div class="t" style="left:1071.3px;top:890.14px;font-size:14.6px;line-height:14.6px;color:#1e1e1e;">RXU0015</div>
<div class="t" style="left:1161.3px;top:890.14px;font-size:14.6px;line-height:14.6px;color:#1e1e1e;">DEA License in no longer active</div>
<div class="a" style="left:306px;top:908.75px;width:1589px;height:22.5px;background:#ffffff"></div>
<div class="t" style="left:313.3px;top:912.64px;font-size:14.6px;line-height:14.6px;color:#1e1e1e;">License</div>
<div class="t" style="left:408.3px;top:912.64px;font-size:14.6px;line-height:14.6px;color:#1e1e1e;">Closed</div>
<div class="t" style="left:484.3px;top:912.64px;font-size:14.6px;line-height:14.6px;color:#1e1e1e;">Trn</div>
<div class="t" style="left:743.3px;top:912.64px;font-size:14.6px;line-height:14.6px;color:#1e1e1e;">C00127</div>
<div class="t" style="left:975.0px;width:89px;text-align:center;top:912.64px;font-size:14.6px;line-height:14.6px;color:#1e1e1e;">6/24/16</div>
<div class="t" style="left:1071.3px;top:912.64px;font-size:14.6px;line-height:14.6px;color:#1e1e1e;">RXU0015</div>
<div class="t" style="left:1161.3px;top:912.64px;font-size:14.6px;line-height:14.6px;color:#1e1e1e;">DEA License in no longer active</div>
<div class="a" style="left:306px;top:931.25px;width:1589px;height:22.5px;background:#f4f4f4"></div>
<div class="t" style="left:313.3px;top:935.14px;font-size:14.6px;line-height:14.6px;color:#1e1e1e;">License</div>
<div class="t" style="left:408.3px;top:935.14px;font-size:14.6px;line-height:14.6px;color:#1e1e1e;">Open</div>
<div class="t" style="left:484.3px;top:935.14px;font-size:14.6px;line-height:14.6px;color:#1e1e1e;">Trn</div>
<div class="t" style="left:743.3px;top:935.14px;font-size:14.6px;line-height:14.6px;color:#1e1e1e;">C00122</div>
<div class="t" style="left:975.0px;width:89px;text-align:center;top:935.14px;font-size:14.6px;line-height:14.6px;color:#1e1e1e;">6/24/16</div>
<div class="t" style="left:1071.3px;top:935.14px;font-size:14.6px;line-height:14.6px;color:#1e1e1e;">RXU0015</div>
<div class="t" style="left:1161.3px;top:935.14px;font-size:14.6px;line-height:14.6px;color:#1e1e1e;">DEA License in no longer active</div>
<div class="a" style="left:306px;top:953.75px;width:1589px;height:22.5px;background:#ffffff"></div>
<div class="t" style="left:313.3px;top:957.64px;font-size:14.6px;line-height:14.6px;color:#1e1e1e;">License</div>
<div class="t" style="left:408.3px;top:957.64px;font-size:14.6px;line-height:14.6px;color:#1e1e1e;">Open</div>
<div class="t" style="left:484.3px;top:957.64px;font-size:14.6px;line-height:14.6px;color:#1e1e1e;">Trn</div>
<div class="t" style="left:743.3px;top:957.64px;font-size:14.6px;line-height:14.6px;color:#1e1e1e;">C00030</div>
<div class="t" style="left:975.0px;width:89px;text-align:center;top:957.64px;font-size:14.6px;line-height:14.6px;color:#1e1e1e;">6/24/16</div>
<div class="t" style="left:1071.3px;top:957.64px;font-size:14.6px;line-height:14.6px;color:#1e1e1e;">RXU0015</div>
<div class="t" style="left:1161.3px;top:957.64px;font-size:14.6px;line-height:14.6px;color:#1e1e1e;">DEA License in no longer active</div>
<div class="a" style="left:401px;top:548px;width:1px;height:429px;background:#d0d0d0"></div>
<div class="a" style="left:477px;top:548px;width:1px;height:429px;background:#d0d0d0"></div>
<div class="a" style="left:528px;top:548px;width:1px;height:429px;background:#d0d0d0"></div>
<div class="a" style="left:629px;top:548px;width:1px;height:429px;background:#d0d0d0"></div>
<div class="a" style="left:668px;top:548px;width:1px;height:429px;background:#d0d0d0"></div>
<div class="a" style="left:736px;top:548px;width:1px;height:429px;background:#d0d0d0"></div>
<div class="a" style="left:837px;top:548px;width:1px;height:429px;background:#d0d0d0"></div>
<div class="a" style="left:924px;top:548px;width:1px;height:429px;background:#d0d0d0"></div>
<div class="a" style="left:974px;top:548px;width:1px;height:429px;background:#d0d0d0"></div>
<div class="a" style="left:1064px;top:548px;width:1px;height:429px;background:#d0d0d0"></div>
<div class="a" style="left:1154px;top:548px;width:1px;height:429px;background:#d0d0d0"></div>
<div class="a" style="left:1717px;top:548px;width:1px;height:429px;background:#d0d0d0"></div>
<div class="a" style="left:1895px;top:526px;width:18px;height:451px;background:linear-gradient(90deg,#cdcdcd,#ececec)"></div>
<div class="a" style="left:1896px;top:527px;width:16px;height:17px;background:linear-gradient(#ffffff,#d4d4d4);border:1.5px solid #6e6e6e;border-radius:4px"></div>
<svg style="left:1900px;top:533px" width="8" height="5" viewBox="0 0 8 5"><path d="M0 5 H8 L4 0.5 Z" fill="#1e1e1e"/></svg>
<div class="a" style="left:1896px;top:959px;width:16px;height:17px;background:linear-gradient(#f8f8f8,#acacac);border:1.5px solid #6e6e6e;border-radius:4px"></div>
<svg style="left:1900px;top:965px" width="8" height="5" viewBox="0 0 8 5"><path d="M0 0 H8 L4 4.5 Z" fill="#1e1e1e"/></svg>
<div class="a" style="left:306px;top:977px;width:1608px;height:5px;background:#e8e8e8"></div>
<div class="a" style="left:306px;top:982px;width:1607px;height:1px;background:#d6d6d6"></div>
<div class="a" style="left:306px;top:983px;width:1607px;height:32px;background:#e4e4e6"></div>
<div class="a" style="left:1913px;top:977px;width:1px;height:38px;background:#d8d8d8"></div>
<div class="t" style="left:1834.5px;top:989.64px;font-size:14.6px;line-height:14.6px;color:#1e1e1e;">More</div>
<div class="t" style="left:660.0px;width:600px;text-align:center;transform:scaleX(0.971);transform-origin:50% 50%;top:1041.10px;font-size:15px;line-height:15px;color:#222;">&copy; 2024 S2K Smart Center - Vormittag Associates Inc.</div>
</body></html>
